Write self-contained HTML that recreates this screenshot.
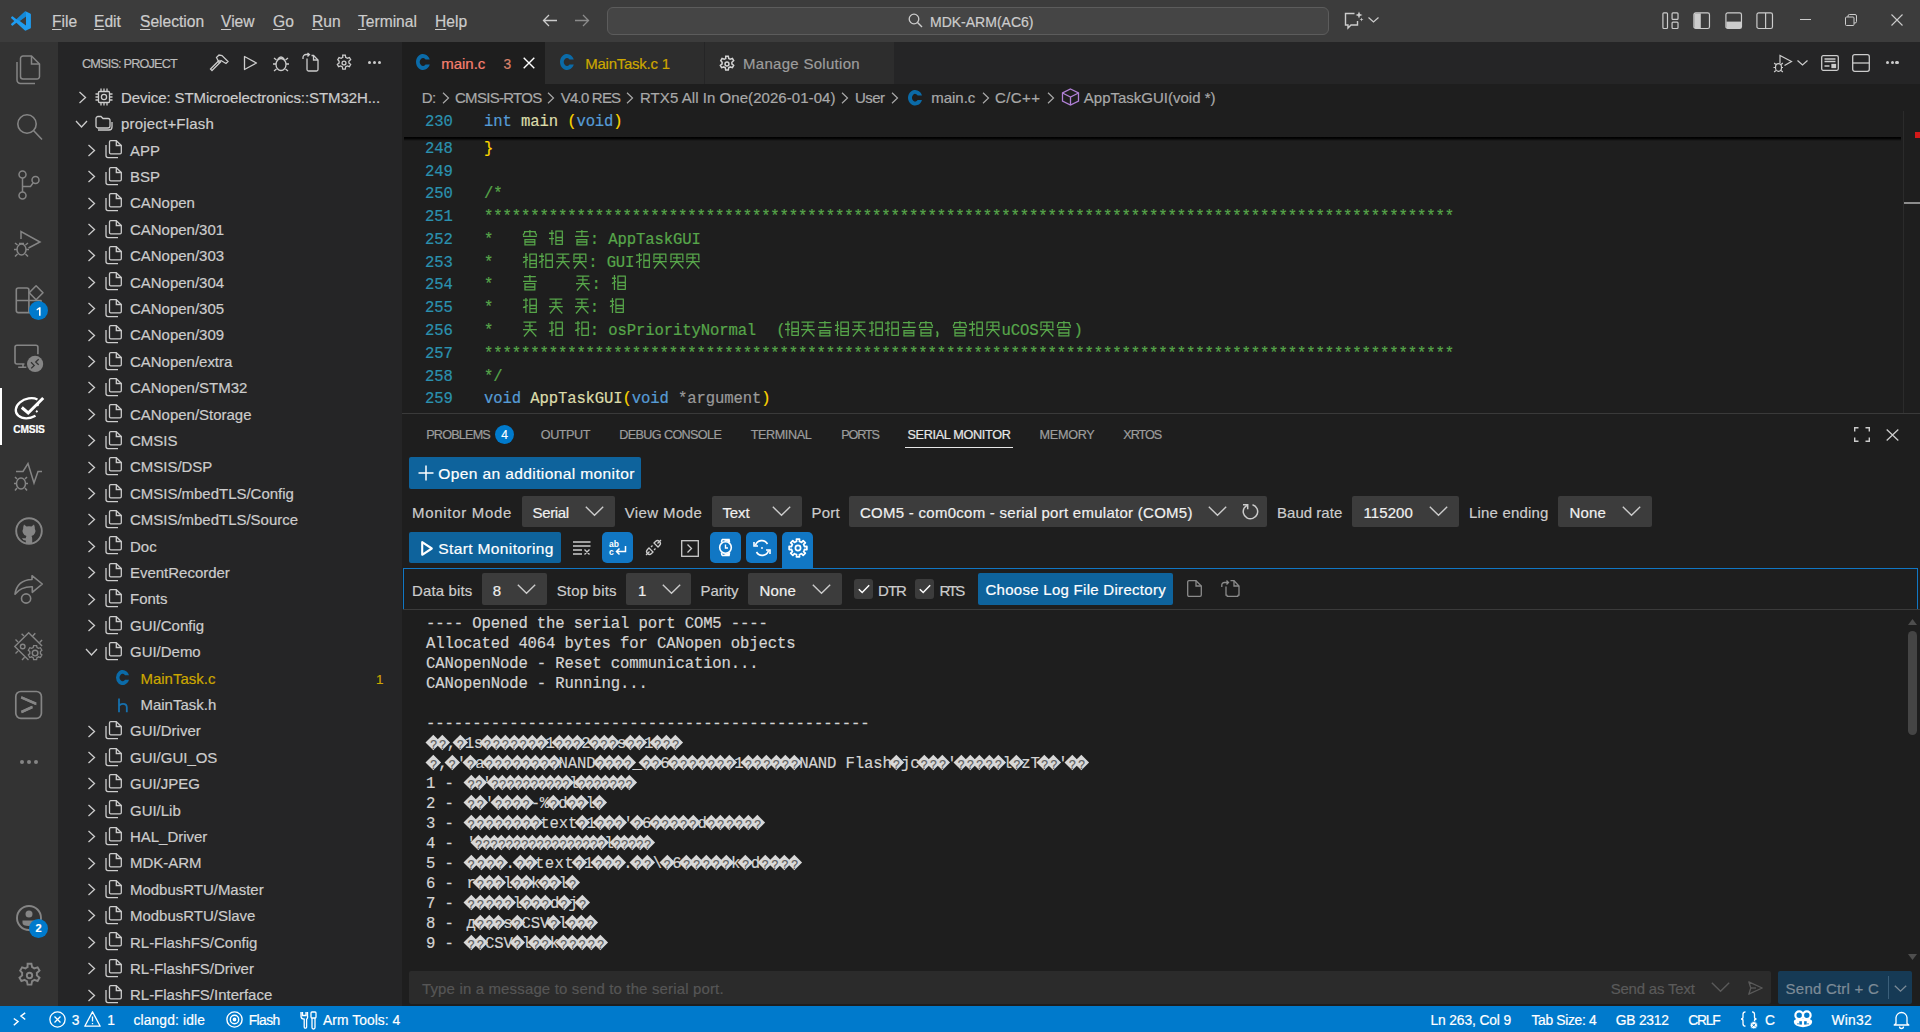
<!DOCTYPE html>
<html><head><meta charset="utf-8"><title>VS Code</title><style>
*{margin:0;padding:0;box-sizing:border-box}
html,body{width:1920px;height:1032px;overflow:hidden;background:#1e1e1e;font-family:"Liberation Sans",sans-serif;color:#cccccc}
.a{position:absolute}
.t{position:absolute;white-space:pre;font-size:15.6px;line-height:15.6px;-webkit-text-stroke:0.2px currentColor}
svg{position:absolute;overflow:visible}
.u{text-decoration:underline;text-underline-offset:2px}
</style></head><body>
<!-- ============ TITLE BAR ============ -->
<div class="a" id="title" style="left:0;top:0;width:1920px;height:42px;background:#3c3c3c"></div>
<svg style="left:10.5px;top:10.5px" width="20" height="20" viewBox="0 0 100 100"><path fill="#1f9cf0" fill-rule="evenodd" d="M74.9 2.3L96 12.5A6 6 0 0 1 99.5 18V82A6 6 0 0 1 96 87.5L74.9 97.7A6 6 0 0 1 68 96.5L27 59L9.5 72.3A4 4 0 0 1 4.4 72L1.3 69.2A4 4 0 0 1 1.3 63.3L16.5 50L1.3 36.7A4 4 0 0 1 1.3 30.8L4.4 28A4 4 0 0 1 9.5 27.7L27 41L68 3.5A6 6 0 0 1 74.9 2.3ZM75 27.3L43.8 50L75 72.7Z"/><path fill="#0065a9" opacity="0.35" d="M27 41L68 3.5L74.9 2.3V27.3L43.8 50Z"/></svg>
<div class="t" style="left:52px;top:13.8px"><span class="u">F</span>ile</div>
<div class="t" style="left:94px;top:13.8px"><span class="u">E</span>dit</div>
<div class="t" style="left:140px;top:13.8px"><span class="u">S</span>election</div>
<div class="t" style="left:221px;top:13.8px"><span class="u">V</span>iew</div>
<div class="t" style="left:273px;top:13.8px"><span class="u">G</span>o</div>
<div class="t" style="left:312px;top:13.8px"><span class="u">R</span>un</div>
<div class="t" style="left:358px;top:13.8px"><span class="u">T</span>erminal</div>
<div class="t" style="left:435px;top:13.8px"><span class="u">H</span>elp</div>
<!-- nav arrows -->
<svg style="left:542px;top:14px" width="16" height="13" viewBox="0 0 16 13"><path d="M15 6.5H1.5M7 1L1.5 6.5L7 12" stroke="#cccccc" stroke-width="1.3" fill="none"/></svg>
<svg style="left:574px;top:14px" width="16" height="13" viewBox="0 0 16 13"><path d="M1 6.5H14.5M9 1L14.5 6.5L9 12" stroke="#8b8b8b" stroke-width="1.3" fill="none"/></svg>
<!-- command center -->
<div class="a" style="left:607px;top:7px;width:722px;height:28px;background:#454545;border:1px solid #5c5c5c;border-radius:6px"></div>
<svg style="left:908px;top:13px" width="15" height="15" viewBox="0 0 15 15"><circle cx="6" cy="6" r="4.8" stroke="#cccccc" stroke-width="1.3" fill="none"/><path d="M9.5 9.5L14 14" stroke="#cccccc" stroke-width="1.4"/></svg>
<div class="t" style="left:930px;top:15px;font-size:14px;line-height:14px">MDK-ARM(AC6)</div>
<!-- copilot chat icon -->
<svg style="left:1344px;top:11px" width="20" height="18" viewBox="0 0 20 18"><path d="M10.5 2.5H1.5V14H4V17L7 14H13.5V10" stroke="#cccccc" stroke-width="1.4" fill="none"/><path d="M15 0.5L16 3L18.5 4L16 5L15 7.5L14 5L11.5 4L14 3Z" fill="#cccccc"/><path d="M17.5 6.5L18 8L19.5 8.5L18 9L17.5 10.5L17 9L15.5 8.5L17 8Z" fill="#cccccc"/></svg>
<svg style="left:1368px;top:17px" width="11" height="6" viewBox="0 0 11 6"><path d="M0.5 0.5L5.5 5L10.5 0.5" stroke="#cccccc" stroke-width="1.2" fill="none"/></svg>
<!-- layout icons -->
<svg style="left:1661.8px;top:11.8px" width="17.4" height="17.4" viewBox="0 0 19 19" fill="none" stroke="#cccccc" stroke-width="1.3"><rect x="1" y="1" width="5" height="17" rx="1"/><rect x="11" y="1" width="6.5" height="7" rx="1"/><rect x="11" y="11" width="6.5" height="7" rx="1"/></svg>
<svg style="left:1692.8px;top:11.8px" width="17.4" height="17.4" viewBox="0 0 19 19"><rect x="1" y="1" width="17" height="17" rx="2" stroke="#cccccc" stroke-width="1.3" fill="none"/><rect x="1.5" y="1.5" width="7" height="16" fill="#cccccc"/></svg>
<svg style="left:1724.8px;top:11.8px" width="17.4" height="17.4" viewBox="0 0 19 19"><rect x="1" y="1" width="17" height="17" rx="2" stroke="#cccccc" stroke-width="1.3" fill="none"/><rect x="1.5" y="10.5" width="16" height="7" fill="#cccccc"/></svg>
<svg style="left:1755.8px;top:11.8px" width="17.4" height="17.4" viewBox="0 0 19 19" fill="none" stroke="#cccccc" stroke-width="1.3"><rect x="1" y="1" width="17" height="17" rx="2"/><path d="M10.5 1V18"/></svg>
<!-- window controls -->
<div class="a" style="left:1800px;top:19px;width:11px;height:1px;background:#cccccc"></div>
<svg style="left:1845px;top:14px" width="12" height="12" viewBox="0 0 12 12" fill="none" stroke="#cccccc" stroke-width="1"><rect x="0.5" y="3" width="8.5" height="8.5" rx="1"/><path d="M3 3V2A1.5 1.5 0 0 1 4.5 0.5H10A1.5 1.5 0 0 1 11.5 2V7.5A1.5 1.5 0 0 1 10 9H9"/></svg>
<svg style="left:1891px;top:14px" width="12" height="12" viewBox="0 0 12 12"><path d="M0.5 0.5L11.5 11.5M11.5 0.5L0.5 11.5" stroke="#cccccc" stroke-width="1.1"/></svg>

<!-- ============ ACTIVITY BAR ============ -->
<div class="a" id="act" style="left:0;top:42px;width:58px;height:964px;background:#333333"></div>
<!-- explorer -->
<svg style="left:16px;top:55px" width="25" height="30" viewBox="0 0 25 30" fill="none" stroke="#858585" stroke-width="1.5"><path d="M4.5 4.5V3.5A2.5 2.5 0 0 1 7 1H15.5L23.5 9V21.5A2.5 2.5 0 0 1 21 24H7A2.5 2.5 0 0 1 4.5 21.5Z"/><path d="M15.5 1V9H23.5"/><path d="M1 7V25A3.5 3.5 0 0 0 4.5 28.5H19"/></svg>
<!-- search -->
<svg style="left:15px;top:113px" width="28" height="28" viewBox="0 0 28 28" fill="none" stroke="#858585" stroke-width="1.6"><circle cx="12" cy="11" r="9.2"/><path d="M18.5 17.5L27 26.5"/></svg>
<!-- source control -->
<svg style="left:17px;top:170px" width="24" height="30" viewBox="0 0 24 30" fill="none" stroke="#858585" stroke-width="1.5"><circle cx="5.5" cy="4.5" r="3.5"/><circle cx="18.5" cy="10" r="3.5"/><circle cx="5.5" cy="25.5" r="3.5"/><path d="M5.5 8V22M5.5 16.5H13.5L16 13"/></svg>
<!-- run & debug -->
<svg style="left:13px;top:229px" width="30" height="29" viewBox="0 0 30 29" fill="none" stroke="#858585" stroke-width="1.5"><path d="M8 10V2.5L27 13L15.5 19"/><ellipse cx="8.5" cy="20.5" rx="4.5" ry="5.5"/><path d="M4 20.5H1M13 20.5H16M4.5 16L2 14M12.5 16L15 14M4.5 25L2 27.5M12.5 25L15 27.5M6 14.5L11 14.5"/></svg>
<!-- extensions -->
<svg style="left:0;top:280px" width="58" height="40" viewBox="0 0 58 40" fill="none" stroke="#858585" stroke-width="1.6" stroke-linejoin="round"><path d="M18.3 8H26.9A2 2 0 0 1 28.9 10V32.6H18.3A2 2 0 0 1 16.3 30.6V10A2 2 0 0 1 18.3 8Z"/><path d="M16.3 20.5H41V30.6A2 2 0 0 1 39 32.6H28.9"/><path d="M36.1 5.8L43 12.8L36.1 19.7L29.2 12.8Z"/></svg>
<div class="a" style="left:29px;top:301px;width:19px;height:19px;border-radius:50%;background:#007acc"></div>
<svg style="left:36px;top:306.5px" width="6" height="9" viewBox="0 0 6 9"><path d="M0.5 2.2L3.3 0.3H4.6V8.7H3V2.3L0.9 3.6Z" fill="#fff"/></svg>
<!-- remote explorer -->
<svg style="left:0;top:336px" width="58" height="40" viewBox="0 0 58 40" fill="none" stroke="#858585" stroke-width="1.6"><path d="M24.5 28H17A2 2 0 0 1 15 26V11.2A2 2 0 0 1 17 9.2H35.9A2 2 0 0 1 37.9 11.2V18.3"/><path d="M18.2 31.2H26.3M23 28V31"/><circle cx="35.1" cy="27.9" r="8.1" fill="#858585" stroke="none"/><path d="M31 26.2L34.2 29.4L31.2 32.4M38.7 23.2L35.7 26L38.7 28.8" stroke="#333333" stroke-width="1.3"/></svg>
<!-- cmsis active -->
<div class="a" style="left:0;top:388px;width:2px;height:57px;background:#ffffff"></div>
<svg style="left:0;top:388px" width="58" height="40" viewBox="0 0 58 40" fill="none" stroke="#ffffff"><path d="M37.5 11.5A13.5 9.6 -18 1 0 35.5 27.8" stroke-width="2.3"/><path d="M21.8 19.5L28.2 25L43.2 10" stroke-width="3"/><path d="M38.6 16.2L37.2 18M37.4 22.6L36.2 24.2" stroke-width="1.8"/></svg>
<div class="t" style="left:13px;top:425.2px;width:32px;text-align:center;font-size:10.2px;line-height:10.2px;color:#fff;font-weight:bold;letter-spacing:-0.2px">CMSIS</div>
<!-- debug waveform -->
<svg style="left:13px;top:461.5px" width="30" height="30" viewBox="0 0 30 30" fill="none" stroke="#858585" stroke-width="1.5"><path d="M3 9.5H10L15 1.5L21 21L25 9.5H29"/><ellipse cx="8" cy="21.5" rx="4.5" ry="5.5"/><path d="M3.5 21.5H1M12.5 21.5H15M4 17L2 15M12 17L14 15M4 26L2 28.5M12 26L14 28.5"/></svg>
<!-- github -->
<svg style="left:15px;top:517px" width="28" height="28" viewBox="0 0 28 28"><circle cx="14" cy="14" r="12.8" fill="none" stroke="#858585" stroke-width="1.9"/><path d="M9 7.5L11.5 9.5Q14 8.8 16.5 9.5L19 7.5Q20 10 19.8 11.5Q21 13.5 20 16Q19 18.5 16.5 19Q17.2 20 17.2 21.5V26.5Q14 27.5 10.8 26.5V23.5Q8 23.8 7 21Q9 21.5 10.8 21.3Q10.8 20 11.5 19Q9 18.5 8 16Q7 13.5 8.2 11.5Q8 10 9 7.5Z" fill="#858585"/></svg>
<!-- share -->
<svg style="left:0;top:568px" width="58" height="40" viewBox="0 0 58 40" fill="none" stroke="#858585" stroke-width="1.6" stroke-linejoin="round"><path d="M15 26.2Q17 12 32 11.5V7.7L42.3 16L32.3 24.3V18.8Q21 18.5 15 26.2Z"/><circle cx="26.1" cy="30.5" r="4.6"/></svg>
<!-- device manager -->
<svg style="left:0;top:626px" width="58" height="40" viewBox="0 0 58 40" fill="none" stroke="#858585" stroke-width="1.4"><path d="M28.5 34.1L14.8 20.5L28.7 6.8L42.1 20"/><path d="M21.6 7.7L24 10M15.5 13.6L18 16M35.3 7.2L32.7 10M42.1 13.9L39.6 16.6M15.5 27.5L18 25M22 33.9L24.6 31.3"/><circle cx="22.7" cy="20.5" r="2.3"/><circle cx="35.1" cy="27.1" r="2.8"/><path d="M33.6 19.6H36.6L37 21.5L38.6 22.4L40.4 21.7L41.9 24.3L40.4 25.6V27.6L41.9 28.9L40.4 31.5L38.6 30.8L37 31.7L36.6 33.6H33.6L33.2 31.7L31.6 30.8L29.8 31.5L28.3 28.9L29.8 27.6V25.6L28.3 24.3L29.8 21.7L31.6 22.4L33.2 21.5Z" stroke-width="1.3"/></svg>
<!-- terminal box -->
<svg style="left:0;top:683px" width="58" height="40" viewBox="0 0 58 40" fill="none" stroke="#858585"><rect x="15.8" y="8.5" width="25.6" height="26.8" rx="5" stroke-width="1.7"/><path d="M21.3 13.2L36.4 19.8L36.4 22.2L21.3 15.6Z" fill="#858585" stroke="none"/><path d="M32.5 22.8L32.5 25.3L21.5 30.2L21.5 27.7Z" fill="#858585" stroke="none"/><path d="M21.2 14.4L36 20.8M32.3 24L21.4 29" stroke-width="2.6"/></svg>
<!-- ellipsis -->
<div class="a" style="left:20px;top:760px;width:4px;height:4px;border-radius:50%;background:#858585"></div>
<div class="a" style="left:27px;top:760px;width:4px;height:4px;border-radius:50%;background:#858585"></div>
<div class="a" style="left:34px;top:760px;width:4px;height:4px;border-radius:50%;background:#858585"></div>
<!-- accounts -->
<svg style="left:16px;top:905px" width="28" height="28" viewBox="0 0 28 28"><circle cx="13" cy="13" r="12" fill="none" stroke="#858585" stroke-width="1.9"/><circle cx="13" cy="9" r="3.5" fill="#858585"/><path d="M6.5 15.5H19.5V18Q19.5 21 13 21Q6.5 21 6.5 18Z" fill="#858585"/></svg>
<div class="a" style="left:29px;top:919px;width:19px;height:19px;border-radius:50%;background:#007acc"></div>
<div class="t" style="left:29px;top:923px;width:19px;text-align:center;font-size:11px;line-height:11px;color:#fff;font-weight:bold">2</div>
<!-- settings -->
<svg style="left:15.5px;top:961.5px" width="27" height="27" viewBox="0 0 24 24"><path fill="none" stroke="#858585" stroke-width="1.7" d="M10.3 1.5h3.4l.6 3.1a7.6 7.6 0 0 1 1.9 1.1l3-1 1.7 2.9-2.4 2.1a7.6 7.6 0 0 1 0 2.2l2.4 2.1-1.7 2.9-3-1a7.6 7.6 0 0 1-1.9 1.1l-.6 3.1h-3.4l-.6-3.1a7.6 7.6 0 0 1-1.9-1.1l-3 1-1.7-2.9 2.4-2.1a7.6 7.6 0 0 1 0-2.2L3.7 7.6l1.7-2.9 3 1a7.6 7.6 0 0 1 1.9-1.1z"/><circle cx="12" cy="12" r="2.4" fill="none" stroke="#858585" stroke-width="1.7"/></svg>

<!-- ============ SIDEBAR ============ -->
<div class="a" style="left:58px;top:42px;width:344px;height:964px;background:#252526"></div>
<div class="t" style="left:82.00px;top:58.00px;font-size:12.67px;line-height:12.67px;color:#bbbbbb;letter-spacing:-0.799px">CMSIS: PROJECT</div>
<svg style="left:209px;top:54px" width="20" height="17" viewBox="0 0 20 17" fill="none" stroke="#cccccc" stroke-width="1.3"><path d="M10.5 6L1.5 15L3 16.5L12 7.5"/><path d="M7.5 3.5L10 1L13 1.5L19 7.5L17 9.5L12 6.5L10 8.5Z" /></svg>
<svg style="left:243px;top:55px" width="15" height="16" viewBox="0 0 15 16" fill="none" stroke="#cccccc" stroke-width="1.3"><path d="M1.5 1.5V14.5L13.5 8Z" stroke-linejoin="round"/></svg>
<svg style="left:272px;top:54px" width="18" height="18" viewBox="0 0 18 18" fill="none" stroke="#cccccc" stroke-width="1.3"><ellipse cx="9" cy="10.5" rx="5" ry="6"/><path d="M5.5 5.5Q9 0.5 12.5 5.5M4 10H1M14 10H17M4.5 6L2 4M13.5 6L16 4M4.5 15L2 17M13.5 15L16 17"/></svg>
<svg style="left:302px;top:53px" width="17" height="19" viewBox="0 0 17 19" fill="none" stroke="#cccccc" stroke-width="1.3"><path d="M5 5.5V16.5A1.5 1.5 0 0 0 6.5 18H14.5A1.5 1.5 0 0 0 16 16.5V7L11.5 2.5H9.5"/><path d="M11.5 2.5V7H16"/><path d="M1 6V4.5A3 3 0 0 1 4 1.5H7M5.5 0L7.5 1.5L5.5 3.5"/></svg>
<svg style="left:335px;top:54px" width="18" height="18" viewBox="0 0 24 24"><path fill="none" stroke="#cccccc" stroke-width="1.7" d="M10.3 1.5h3.4l.6 3.1a7.6 7.6 0 0 1 1.9 1.1l3-1 1.7 2.9-2.4 2.1a7.6 7.6 0 0 1 0 2.2l2.4 2.1-1.7 2.9-3-1a7.6 7.6 0 0 1-1.9 1.1l-.6 3.1h-3.4l-.6-3.1a7.6 7.6 0 0 1-1.9-1.1l-3 1-1.7-2.9 2.4-2.1a7.6 7.6 0 0 1 0-2.2L3.7 7.6l1.7-2.9 3 1a7.6 7.6 0 0 1 1.9-1.1z"/><circle cx="12" cy="12" r="2.6" fill="none" stroke="#cccccc" stroke-width="1.7"/></svg>
<div class="a" style="left:367.79999999999995px;top:60.9px;width:3.2px;height:3.2px;background:#cccccc;border-radius:50%"></div>
<div class="a" style="left:373.0px;top:60.9px;width:3.2px;height:3.2px;background:#cccccc;border-radius:50%"></div>
<div class="a" style="left:378.2px;top:60.9px;width:3.2px;height:3.2px;background:#cccccc;border-radius:50%"></div>
<svg style="left:77.5px;top:90.9px" width="9" height="13" viewBox="0 0 9 13"><path d="M1.5 1L7.5 6.5L1.5 12" stroke="#cccccc" stroke-width="1.3" fill="none"/></svg>
<svg style="left:95px;top:88.4px" width="18" height="18" viewBox="0 0 18 18" fill="none" stroke="#cccccc" stroke-width="1.3"><rect x="3.5" y="3.5" width="11" height="11" rx="1"/><circle cx="9" cy="9" r="2.6"/><path d="M6 0.5V3M9 0.5V3M12 0.5V3M6 15V17.5M9 15V17.5M12 15V17.5M0.5 6H3M0.5 9H3M0.5 12H3M15 6H17.5M15 9H17.5M15 12H17.5"/></svg>
<div class="t" style="left:121.00px;top:90.00px;font-size:14.98px;line-height:14.98px;letter-spacing:-0.059px">Device: STMicroelectronics::STM32H...</div>
<svg style="left:74.5px;top:119.8px" width="13" height="8" viewBox="0 0 13 8"><path d="M1 1L6.5 7L12 1" stroke="#cccccc" stroke-width="1.3" fill="none"/></svg>
<svg style="left:95px;top:114.8px" width="18" height="16" viewBox="0 0 18 16" fill="none" stroke="#cccccc" stroke-width="1.3"><path d="M1 3.5A2 2 0 0 1 3 1.5H6L8 3.5H13A2 2 0 0 1 15 5.5V11A2 2 0 0 1 13 13H3A2 2 0 0 1 1 11Z"/><path d="M3 15H14A3 3 0 0 0 17 12V7"/></svg>
<div class="t" style="left:121.00px;top:116.00px;font-size:14.98px;line-height:14.98px;letter-spacing:0.209px">project+Flash</div>
<svg style="left:87px;top:143.7px" width="9" height="13" viewBox="0 0 9 13"><path d="M1.5 1L7.5 6.5L1.5 12" stroke="#cccccc" stroke-width="1.3" fill="none"/></svg>
<svg style="left:105px;top:140.4px" width="18" height="19" viewBox="0 0 18 19" fill="none" stroke="#cccccc" stroke-width="1.3"><path d="M4.5 1.9A1.2 1.2 0 0 1 5.7 0.7H11.3L16.3 5.5V12.6A1.2 1.2 0 0 1 15.1 13.8H5.7A1.2 1.2 0 0 1 4.5 12.6Z"/><path d="M11.3 0.7V5.5H16.3"/><path d="M1 5V15.6A2 2 0 0 0 3 17.6H13"/></svg>
<div class="t" style="left:130.00px;top:143.00px;font-size:14.98px;line-height:14.98px">APP</div>
<svg style="left:87px;top:170.1px" width="9" height="13" viewBox="0 0 9 13"><path d="M1.5 1L7.5 6.5L1.5 12" stroke="#cccccc" stroke-width="1.3" fill="none"/></svg>
<svg style="left:105px;top:166.8px" width="18" height="19" viewBox="0 0 18 19" fill="none" stroke="#cccccc" stroke-width="1.3"><path d="M4.5 1.9A1.2 1.2 0 0 1 5.7 0.7H11.3L16.3 5.5V12.6A1.2 1.2 0 0 1 15.1 13.8H5.7A1.2 1.2 0 0 1 4.5 12.6Z"/><path d="M11.3 0.7V5.5H16.3"/><path d="M1 5V15.6A2 2 0 0 0 3 17.6H13"/></svg>
<div class="t" style="left:130.00px;top:169.00px;font-size:14.98px;line-height:14.98px">BSP</div>
<svg style="left:87px;top:196.5px" width="9" height="13" viewBox="0 0 9 13"><path d="M1.5 1L7.5 6.5L1.5 12" stroke="#cccccc" stroke-width="1.3" fill="none"/></svg>
<svg style="left:105px;top:193.2px" width="18" height="19" viewBox="0 0 18 19" fill="none" stroke="#cccccc" stroke-width="1.3"><path d="M4.5 1.9A1.2 1.2 0 0 1 5.7 0.7H11.3L16.3 5.5V12.6A1.2 1.2 0 0 1 15.1 13.8H5.7A1.2 1.2 0 0 1 4.5 12.6Z"/><path d="M11.3 0.7V5.5H16.3"/><path d="M1 5V15.6A2 2 0 0 0 3 17.6H13"/></svg>
<div class="t" style="left:130.00px;top:195.00px;font-size:14.98px;line-height:14.98px">CANopen</div>
<svg style="left:87px;top:222.9px" width="9" height="13" viewBox="0 0 9 13"><path d="M1.5 1L7.5 6.5L1.5 12" stroke="#cccccc" stroke-width="1.3" fill="none"/></svg>
<svg style="left:105px;top:219.6px" width="18" height="19" viewBox="0 0 18 19" fill="none" stroke="#cccccc" stroke-width="1.3"><path d="M4.5 1.9A1.2 1.2 0 0 1 5.7 0.7H11.3L16.3 5.5V12.6A1.2 1.2 0 0 1 15.1 13.8H5.7A1.2 1.2 0 0 1 4.5 12.6Z"/><path d="M11.3 0.7V5.5H16.3"/><path d="M1 5V15.6A2 2 0 0 0 3 17.6H13"/></svg>
<div class="t" style="left:130.00px;top:222.00px;font-size:14.98px;line-height:14.98px">CANopen/301</div>
<svg style="left:87px;top:249.3px" width="9" height="13" viewBox="0 0 9 13"><path d="M1.5 1L7.5 6.5L1.5 12" stroke="#cccccc" stroke-width="1.3" fill="none"/></svg>
<svg style="left:105px;top:246.0px" width="18" height="19" viewBox="0 0 18 19" fill="none" stroke="#cccccc" stroke-width="1.3"><path d="M4.5 1.9A1.2 1.2 0 0 1 5.7 0.7H11.3L16.3 5.5V12.6A1.2 1.2 0 0 1 15.1 13.8H5.7A1.2 1.2 0 0 1 4.5 12.6Z"/><path d="M11.3 0.7V5.5H16.3"/><path d="M1 5V15.6A2 2 0 0 0 3 17.6H13"/></svg>
<div class="t" style="left:130.00px;top:248.00px;font-size:14.98px;line-height:14.98px">CANopen/303</div>
<svg style="left:87px;top:275.7px" width="9" height="13" viewBox="0 0 9 13"><path d="M1.5 1L7.5 6.5L1.5 12" stroke="#cccccc" stroke-width="1.3" fill="none"/></svg>
<svg style="left:105px;top:272.4px" width="18" height="19" viewBox="0 0 18 19" fill="none" stroke="#cccccc" stroke-width="1.3"><path d="M4.5 1.9A1.2 1.2 0 0 1 5.7 0.7H11.3L16.3 5.5V12.6A1.2 1.2 0 0 1 15.1 13.8H5.7A1.2 1.2 0 0 1 4.5 12.6Z"/><path d="M11.3 0.7V5.5H16.3"/><path d="M1 5V15.6A2 2 0 0 0 3 17.6H13"/></svg>
<div class="t" style="left:130.00px;top:275.00px;font-size:14.98px;line-height:14.98px">CANopen/304</div>
<svg style="left:87px;top:302.1px" width="9" height="13" viewBox="0 0 9 13"><path d="M1.5 1L7.5 6.5L1.5 12" stroke="#cccccc" stroke-width="1.3" fill="none"/></svg>
<svg style="left:105px;top:298.8px" width="18" height="19" viewBox="0 0 18 19" fill="none" stroke="#cccccc" stroke-width="1.3"><path d="M4.5 1.9A1.2 1.2 0 0 1 5.7 0.7H11.3L16.3 5.5V12.6A1.2 1.2 0 0 1 15.1 13.8H5.7A1.2 1.2 0 0 1 4.5 12.6Z"/><path d="M11.3 0.7V5.5H16.3"/><path d="M1 5V15.6A2 2 0 0 0 3 17.6H13"/></svg>
<div class="t" style="left:130.00px;top:301.00px;font-size:14.98px;line-height:14.98px">CANopen/305</div>
<svg style="left:87px;top:328.5px" width="9" height="13" viewBox="0 0 9 13"><path d="M1.5 1L7.5 6.5L1.5 12" stroke="#cccccc" stroke-width="1.3" fill="none"/></svg>
<svg style="left:105px;top:325.2px" width="18" height="19" viewBox="0 0 18 19" fill="none" stroke="#cccccc" stroke-width="1.3"><path d="M4.5 1.9A1.2 1.2 0 0 1 5.7 0.7H11.3L16.3 5.5V12.6A1.2 1.2 0 0 1 15.1 13.8H5.7A1.2 1.2 0 0 1 4.5 12.6Z"/><path d="M11.3 0.7V5.5H16.3"/><path d="M1 5V15.6A2 2 0 0 0 3 17.6H13"/></svg>
<div class="t" style="left:130.00px;top:327.00px;font-size:14.98px;line-height:14.98px">CANopen/309</div>
<svg style="left:87px;top:354.9px" width="9" height="13" viewBox="0 0 9 13"><path d="M1.5 1L7.5 6.5L1.5 12" stroke="#cccccc" stroke-width="1.3" fill="none"/></svg>
<svg style="left:105px;top:351.6px" width="18" height="19" viewBox="0 0 18 19" fill="none" stroke="#cccccc" stroke-width="1.3"><path d="M4.5 1.9A1.2 1.2 0 0 1 5.7 0.7H11.3L16.3 5.5V12.6A1.2 1.2 0 0 1 15.1 13.8H5.7A1.2 1.2 0 0 1 4.5 12.6Z"/><path d="M11.3 0.7V5.5H16.3"/><path d="M1 5V15.6A2 2 0 0 0 3 17.6H13"/></svg>
<div class="t" style="left:130.00px;top:354.00px;font-size:14.98px;line-height:14.98px">CANopen/extra</div>
<svg style="left:87px;top:381.3px" width="9" height="13" viewBox="0 0 9 13"><path d="M1.5 1L7.5 6.5L1.5 12" stroke="#cccccc" stroke-width="1.3" fill="none"/></svg>
<svg style="left:105px;top:378.0px" width="18" height="19" viewBox="0 0 18 19" fill="none" stroke="#cccccc" stroke-width="1.3"><path d="M4.5 1.9A1.2 1.2 0 0 1 5.7 0.7H11.3L16.3 5.5V12.6A1.2 1.2 0 0 1 15.1 13.8H5.7A1.2 1.2 0 0 1 4.5 12.6Z"/><path d="M11.3 0.7V5.5H16.3"/><path d="M1 5V15.6A2 2 0 0 0 3 17.6H13"/></svg>
<div class="t" style="left:130.00px;top:380.00px;font-size:14.98px;line-height:14.98px">CANopen/STM32</div>
<svg style="left:87px;top:407.7px" width="9" height="13" viewBox="0 0 9 13"><path d="M1.5 1L7.5 6.5L1.5 12" stroke="#cccccc" stroke-width="1.3" fill="none"/></svg>
<svg style="left:105px;top:404.4px" width="18" height="19" viewBox="0 0 18 19" fill="none" stroke="#cccccc" stroke-width="1.3"><path d="M4.5 1.9A1.2 1.2 0 0 1 5.7 0.7H11.3L16.3 5.5V12.6A1.2 1.2 0 0 1 15.1 13.8H5.7A1.2 1.2 0 0 1 4.5 12.6Z"/><path d="M11.3 0.7V5.5H16.3"/><path d="M1 5V15.6A2 2 0 0 0 3 17.6H13"/></svg>
<div class="t" style="left:130.00px;top:407.00px;font-size:14.98px;line-height:14.98px">CANopen/Storage</div>
<svg style="left:87px;top:434.1px" width="9" height="13" viewBox="0 0 9 13"><path d="M1.5 1L7.5 6.5L1.5 12" stroke="#cccccc" stroke-width="1.3" fill="none"/></svg>
<svg style="left:105px;top:430.8px" width="18" height="19" viewBox="0 0 18 19" fill="none" stroke="#cccccc" stroke-width="1.3"><path d="M4.5 1.9A1.2 1.2 0 0 1 5.7 0.7H11.3L16.3 5.5V12.6A1.2 1.2 0 0 1 15.1 13.8H5.7A1.2 1.2 0 0 1 4.5 12.6Z"/><path d="M11.3 0.7V5.5H16.3"/><path d="M1 5V15.6A2 2 0 0 0 3 17.6H13"/></svg>
<div class="t" style="left:130.00px;top:433.00px;font-size:14.98px;line-height:14.98px">CMSIS</div>
<svg style="left:87px;top:460.5px" width="9" height="13" viewBox="0 0 9 13"><path d="M1.5 1L7.5 6.5L1.5 12" stroke="#cccccc" stroke-width="1.3" fill="none"/></svg>
<svg style="left:105px;top:457.2px" width="18" height="19" viewBox="0 0 18 19" fill="none" stroke="#cccccc" stroke-width="1.3"><path d="M4.5 1.9A1.2 1.2 0 0 1 5.7 0.7H11.3L16.3 5.5V12.6A1.2 1.2 0 0 1 15.1 13.8H5.7A1.2 1.2 0 0 1 4.5 12.6Z"/><path d="M11.3 0.7V5.5H16.3"/><path d="M1 5V15.6A2 2 0 0 0 3 17.6H13"/></svg>
<div class="t" style="left:130.00px;top:459.00px;font-size:14.98px;line-height:14.98px">CMSIS/DSP</div>
<svg style="left:87px;top:486.9px" width="9" height="13" viewBox="0 0 9 13"><path d="M1.5 1L7.5 6.5L1.5 12" stroke="#cccccc" stroke-width="1.3" fill="none"/></svg>
<svg style="left:105px;top:483.6px" width="18" height="19" viewBox="0 0 18 19" fill="none" stroke="#cccccc" stroke-width="1.3"><path d="M4.5 1.9A1.2 1.2 0 0 1 5.7 0.7H11.3L16.3 5.5V12.6A1.2 1.2 0 0 1 15.1 13.8H5.7A1.2 1.2 0 0 1 4.5 12.6Z"/><path d="M11.3 0.7V5.5H16.3"/><path d="M1 5V15.6A2 2 0 0 0 3 17.6H13"/></svg>
<div class="t" style="left:130.00px;top:486.00px;font-size:14.98px;line-height:14.98px">CMSIS/mbedTLS/Config</div>
<svg style="left:87px;top:513.3px" width="9" height="13" viewBox="0 0 9 13"><path d="M1.5 1L7.5 6.5L1.5 12" stroke="#cccccc" stroke-width="1.3" fill="none"/></svg>
<svg style="left:105px;top:510.0px" width="18" height="19" viewBox="0 0 18 19" fill="none" stroke="#cccccc" stroke-width="1.3"><path d="M4.5 1.9A1.2 1.2 0 0 1 5.7 0.7H11.3L16.3 5.5V12.6A1.2 1.2 0 0 1 15.1 13.8H5.7A1.2 1.2 0 0 1 4.5 12.6Z"/><path d="M11.3 0.7V5.5H16.3"/><path d="M1 5V15.6A2 2 0 0 0 3 17.6H13"/></svg>
<div class="t" style="left:130.00px;top:512.00px;font-size:14.98px;line-height:14.98px">CMSIS/mbedTLS/Source</div>
<svg style="left:87px;top:539.7px" width="9" height="13" viewBox="0 0 9 13"><path d="M1.5 1L7.5 6.5L1.5 12" stroke="#cccccc" stroke-width="1.3" fill="none"/></svg>
<svg style="left:105px;top:536.4px" width="18" height="19" viewBox="0 0 18 19" fill="none" stroke="#cccccc" stroke-width="1.3"><path d="M4.5 1.9A1.2 1.2 0 0 1 5.7 0.7H11.3L16.3 5.5V12.6A1.2 1.2 0 0 1 15.1 13.8H5.7A1.2 1.2 0 0 1 4.5 12.6Z"/><path d="M11.3 0.7V5.5H16.3"/><path d="M1 5V15.6A2 2 0 0 0 3 17.6H13"/></svg>
<div class="t" style="left:130.00px;top:539.00px;font-size:14.98px;line-height:14.98px">Doc</div>
<svg style="left:87px;top:566.1px" width="9" height="13" viewBox="0 0 9 13"><path d="M1.5 1L7.5 6.5L1.5 12" stroke="#cccccc" stroke-width="1.3" fill="none"/></svg>
<svg style="left:105px;top:562.8px" width="18" height="19" viewBox="0 0 18 19" fill="none" stroke="#cccccc" stroke-width="1.3"><path d="M4.5 1.9A1.2 1.2 0 0 1 5.7 0.7H11.3L16.3 5.5V12.6A1.2 1.2 0 0 1 15.1 13.8H5.7A1.2 1.2 0 0 1 4.5 12.6Z"/><path d="M11.3 0.7V5.5H16.3"/><path d="M1 5V15.6A2 2 0 0 0 3 17.6H13"/></svg>
<div class="t" style="left:130.00px;top:565.00px;font-size:14.98px;line-height:14.98px">EventRecorder</div>
<svg style="left:87px;top:592.5px" width="9" height="13" viewBox="0 0 9 13"><path d="M1.5 1L7.5 6.5L1.5 12" stroke="#cccccc" stroke-width="1.3" fill="none"/></svg>
<svg style="left:105px;top:589.2px" width="18" height="19" viewBox="0 0 18 19" fill="none" stroke="#cccccc" stroke-width="1.3"><path d="M4.5 1.9A1.2 1.2 0 0 1 5.7 0.7H11.3L16.3 5.5V12.6A1.2 1.2 0 0 1 15.1 13.8H5.7A1.2 1.2 0 0 1 4.5 12.6Z"/><path d="M11.3 0.7V5.5H16.3"/><path d="M1 5V15.6A2 2 0 0 0 3 17.6H13"/></svg>
<div class="t" style="left:130.00px;top:591.00px;font-size:14.98px;line-height:14.98px">Fonts</div>
<svg style="left:87px;top:618.9px" width="9" height="13" viewBox="0 0 9 13"><path d="M1.5 1L7.5 6.5L1.5 12" stroke="#cccccc" stroke-width="1.3" fill="none"/></svg>
<svg style="left:105px;top:615.6px" width="18" height="19" viewBox="0 0 18 19" fill="none" stroke="#cccccc" stroke-width="1.3"><path d="M4.5 1.9A1.2 1.2 0 0 1 5.7 0.7H11.3L16.3 5.5V12.6A1.2 1.2 0 0 1 15.1 13.8H5.7A1.2 1.2 0 0 1 4.5 12.6Z"/><path d="M11.3 0.7V5.5H16.3"/><path d="M1 5V15.6A2 2 0 0 0 3 17.6H13"/></svg>
<div class="t" style="left:130.00px;top:618.00px;font-size:14.98px;line-height:14.98px">GUI/Config</div>
<svg style="left:84.5px;top:647.8px" width="13" height="8" viewBox="0 0 13 8"><path d="M1 1L6.5 7L12 1" stroke="#cccccc" stroke-width="1.3" fill="none"/></svg>
<svg style="left:105px;top:642.0px" width="18" height="19" viewBox="0 0 18 19" fill="none" stroke="#cccccc" stroke-width="1.3"><path d="M4.5 1.9A1.2 1.2 0 0 1 5.7 0.7H11.3L16.3 5.5V12.6A1.2 1.2 0 0 1 15.1 13.8H5.7A1.2 1.2 0 0 1 4.5 12.6Z"/><path d="M11.3 0.7V5.5H16.3"/><path d="M1 5V15.6A2 2 0 0 0 3 17.6H13"/></svg>
<div class="t" style="left:130.00px;top:644.00px;font-size:14.98px;line-height:14.98px">GUI/Demo</div>
<svg style="left:115.8px;top:669.6999999999999px" width="13.3" height="15.1" viewBox="0 0 14 16" preserveAspectRatio="none"><path d="M13.68 5.6A7 8 0 1 0 13.68 10.4L9.48 10.4A3.1 4 0 1 1 9.48 5.6Z" fill="#0b6ba8"/></svg>
<div class="t" style="left:376.00px;top:673.00px;font-size:13.44px;line-height:13.44px;color:#cca700">1</div>
<div class="t" style="left:140.50px;top:671.00px;font-size:14.98px;line-height:14.98px;color:#cca700">MainTask.c</div>
<svg style="left:116.5px;top:698.2px" width="12" height="15" viewBox="0 0 12 15" fill="none" stroke="#1670ad" stroke-width="1.8"><path d="M2 0.5V14.3M2 8Q3 5.8 6 5.8Q9.8 5.8 9.8 9.3V14.3"/></svg>
<div class="t" style="left:140.50px;top:697.00px;font-size:14.98px;line-height:14.98px;color:#cccccc">MainTask.h</div>
<svg style="left:87px;top:724.5px" width="9" height="13" viewBox="0 0 9 13"><path d="M1.5 1L7.5 6.5L1.5 12" stroke="#cccccc" stroke-width="1.3" fill="none"/></svg>
<svg style="left:105px;top:721.2px" width="18" height="19" viewBox="0 0 18 19" fill="none" stroke="#cccccc" stroke-width="1.3"><path d="M4.5 1.9A1.2 1.2 0 0 1 5.7 0.7H11.3L16.3 5.5V12.6A1.2 1.2 0 0 1 15.1 13.8H5.7A1.2 1.2 0 0 1 4.5 12.6Z"/><path d="M11.3 0.7V5.5H16.3"/><path d="M1 5V15.6A2 2 0 0 0 3 17.6H13"/></svg>
<div class="t" style="left:130.00px;top:723.00px;font-size:14.98px;line-height:14.98px">GUI/Driver</div>
<svg style="left:87px;top:750.9px" width="9" height="13" viewBox="0 0 9 13"><path d="M1.5 1L7.5 6.5L1.5 12" stroke="#cccccc" stroke-width="1.3" fill="none"/></svg>
<svg style="left:105px;top:747.6px" width="18" height="19" viewBox="0 0 18 19" fill="none" stroke="#cccccc" stroke-width="1.3"><path d="M4.5 1.9A1.2 1.2 0 0 1 5.7 0.7H11.3L16.3 5.5V12.6A1.2 1.2 0 0 1 15.1 13.8H5.7A1.2 1.2 0 0 1 4.5 12.6Z"/><path d="M11.3 0.7V5.5H16.3"/><path d="M1 5V15.6A2 2 0 0 0 3 17.6H13"/></svg>
<div class="t" style="left:130.00px;top:750.00px;font-size:14.98px;line-height:14.98px">GUI/GUI_OS</div>
<svg style="left:87px;top:777.3px" width="9" height="13" viewBox="0 0 9 13"><path d="M1.5 1L7.5 6.5L1.5 12" stroke="#cccccc" stroke-width="1.3" fill="none"/></svg>
<svg style="left:105px;top:774.0px" width="18" height="19" viewBox="0 0 18 19" fill="none" stroke="#cccccc" stroke-width="1.3"><path d="M4.5 1.9A1.2 1.2 0 0 1 5.7 0.7H11.3L16.3 5.5V12.6A1.2 1.2 0 0 1 15.1 13.8H5.7A1.2 1.2 0 0 1 4.5 12.6Z"/><path d="M11.3 0.7V5.5H16.3"/><path d="M1 5V15.6A2 2 0 0 0 3 17.6H13"/></svg>
<div class="t" style="left:130.00px;top:776.00px;font-size:14.98px;line-height:14.98px">GUI/JPEG</div>
<svg style="left:87px;top:803.7px" width="9" height="13" viewBox="0 0 9 13"><path d="M1.5 1L7.5 6.5L1.5 12" stroke="#cccccc" stroke-width="1.3" fill="none"/></svg>
<svg style="left:105px;top:800.4px" width="18" height="19" viewBox="0 0 18 19" fill="none" stroke="#cccccc" stroke-width="1.3"><path d="M4.5 1.9A1.2 1.2 0 0 1 5.7 0.7H11.3L16.3 5.5V12.6A1.2 1.2 0 0 1 15.1 13.8H5.7A1.2 1.2 0 0 1 4.5 12.6Z"/><path d="M11.3 0.7V5.5H16.3"/><path d="M1 5V15.6A2 2 0 0 0 3 17.6H13"/></svg>
<div class="t" style="left:130.00px;top:803.00px;font-size:14.98px;line-height:14.98px">GUI/Lib</div>
<svg style="left:87px;top:830.1px" width="9" height="13" viewBox="0 0 9 13"><path d="M1.5 1L7.5 6.5L1.5 12" stroke="#cccccc" stroke-width="1.3" fill="none"/></svg>
<svg style="left:105px;top:826.8px" width="18" height="19" viewBox="0 0 18 19" fill="none" stroke="#cccccc" stroke-width="1.3"><path d="M4.5 1.9A1.2 1.2 0 0 1 5.7 0.7H11.3L16.3 5.5V12.6A1.2 1.2 0 0 1 15.1 13.8H5.7A1.2 1.2 0 0 1 4.5 12.6Z"/><path d="M11.3 0.7V5.5H16.3"/><path d="M1 5V15.6A2 2 0 0 0 3 17.6H13"/></svg>
<div class="t" style="left:130.00px;top:829.00px;font-size:14.98px;line-height:14.98px">HAL_Driver</div>
<svg style="left:87px;top:856.5px" width="9" height="13" viewBox="0 0 9 13"><path d="M1.5 1L7.5 6.5L1.5 12" stroke="#cccccc" stroke-width="1.3" fill="none"/></svg>
<svg style="left:105px;top:853.2px" width="18" height="19" viewBox="0 0 18 19" fill="none" stroke="#cccccc" stroke-width="1.3"><path d="M4.5 1.9A1.2 1.2 0 0 1 5.7 0.7H11.3L16.3 5.5V12.6A1.2 1.2 0 0 1 15.1 13.8H5.7A1.2 1.2 0 0 1 4.5 12.6Z"/><path d="M11.3 0.7V5.5H16.3"/><path d="M1 5V15.6A2 2 0 0 0 3 17.6H13"/></svg>
<div class="t" style="left:130.00px;top:855.00px;font-size:14.98px;line-height:14.98px">MDK-ARM</div>
<svg style="left:87px;top:882.9px" width="9" height="13" viewBox="0 0 9 13"><path d="M1.5 1L7.5 6.5L1.5 12" stroke="#cccccc" stroke-width="1.3" fill="none"/></svg>
<svg style="left:105px;top:879.6px" width="18" height="19" viewBox="0 0 18 19" fill="none" stroke="#cccccc" stroke-width="1.3"><path d="M4.5 1.9A1.2 1.2 0 0 1 5.7 0.7H11.3L16.3 5.5V12.6A1.2 1.2 0 0 1 15.1 13.8H5.7A1.2 1.2 0 0 1 4.5 12.6Z"/><path d="M11.3 0.7V5.5H16.3"/><path d="M1 5V15.6A2 2 0 0 0 3 17.6H13"/></svg>
<div class="t" style="left:130.00px;top:882.00px;font-size:14.98px;line-height:14.98px">ModbusRTU/Master</div>
<svg style="left:87px;top:909.3px" width="9" height="13" viewBox="0 0 9 13"><path d="M1.5 1L7.5 6.5L1.5 12" stroke="#cccccc" stroke-width="1.3" fill="none"/></svg>
<svg style="left:105px;top:906.0px" width="18" height="19" viewBox="0 0 18 19" fill="none" stroke="#cccccc" stroke-width="1.3"><path d="M4.5 1.9A1.2 1.2 0 0 1 5.7 0.7H11.3L16.3 5.5V12.6A1.2 1.2 0 0 1 15.1 13.8H5.7A1.2 1.2 0 0 1 4.5 12.6Z"/><path d="M11.3 0.7V5.5H16.3"/><path d="M1 5V15.6A2 2 0 0 0 3 17.6H13"/></svg>
<div class="t" style="left:130.00px;top:908.00px;font-size:14.98px;line-height:14.98px">ModbusRTU/Slave</div>
<svg style="left:87px;top:935.7px" width="9" height="13" viewBox="0 0 9 13"><path d="M1.5 1L7.5 6.5L1.5 12" stroke="#cccccc" stroke-width="1.3" fill="none"/></svg>
<svg style="left:105px;top:932.4px" width="18" height="19" viewBox="0 0 18 19" fill="none" stroke="#cccccc" stroke-width="1.3"><path d="M4.5 1.9A1.2 1.2 0 0 1 5.7 0.7H11.3L16.3 5.5V12.6A1.2 1.2 0 0 1 15.1 13.8H5.7A1.2 1.2 0 0 1 4.5 12.6Z"/><path d="M11.3 0.7V5.5H16.3"/><path d="M1 5V15.6A2 2 0 0 0 3 17.6H13"/></svg>
<div class="t" style="left:130.00px;top:935.00px;font-size:14.98px;line-height:14.98px">RL-FlashFS/Config</div>
<svg style="left:87px;top:962.1px" width="9" height="13" viewBox="0 0 9 13"><path d="M1.5 1L7.5 6.5L1.5 12" stroke="#cccccc" stroke-width="1.3" fill="none"/></svg>
<svg style="left:105px;top:958.8px" width="18" height="19" viewBox="0 0 18 19" fill="none" stroke="#cccccc" stroke-width="1.3"><path d="M4.5 1.9A1.2 1.2 0 0 1 5.7 0.7H11.3L16.3 5.5V12.6A1.2 1.2 0 0 1 15.1 13.8H5.7A1.2 1.2 0 0 1 4.5 12.6Z"/><path d="M11.3 0.7V5.5H16.3"/><path d="M1 5V15.6A2 2 0 0 0 3 17.6H13"/></svg>
<div class="t" style="left:130.00px;top:961.00px;font-size:14.98px;line-height:14.98px">RL-FlashFS/Driver</div>
<svg style="left:87px;top:988.5px" width="9" height="13" viewBox="0 0 9 13"><path d="M1.5 1L7.5 6.5L1.5 12" stroke="#cccccc" stroke-width="1.3" fill="none"/></svg>
<svg style="left:105px;top:985.2px" width="18" height="19" viewBox="0 0 18 19" fill="none" stroke="#cccccc" stroke-width="1.3"><path d="M4.5 1.9A1.2 1.2 0 0 1 5.7 0.7H11.3L16.3 5.5V12.6A1.2 1.2 0 0 1 15.1 13.8H5.7A1.2 1.2 0 0 1 4.5 12.6Z"/><path d="M11.3 0.7V5.5H16.3"/><path d="M1 5V15.6A2 2 0 0 0 3 17.6H13"/></svg>
<div class="t" style="left:130.00px;top:987.00px;font-size:14.98px;line-height:14.98px">RL-FlashFS/Interface</div>
<!-- ============ EDITOR ============ -->
<div class="a" style="left:402px;top:42px;width:1518px;height:42px;background:#252526"></div>
<div class="a" style="left:402px;top:42px;width:143px;height:42px;background:#1e1e1e"></div>
<div class="a" style="left:545.3px;top:42px;width:158.7px;height:42px;background:#2d2d2d"></div>
<div class="a" style="left:704px;top:42px;width:1px;height:42px;background:#252526"></div>
<div class="a" style="left:705px;top:42px;width:189px;height:42px;background:#2d2d2d"></div>
<svg style="left:416.3px;top:54.3px" width="14.1" height="16" viewBox="0 0 14 16" preserveAspectRatio="none"><path d="M13.68 5.6A7 8 0 1 0 13.68 10.4L9.48 10.4A3.1 4 0 1 1 9.48 5.6Z" fill="#0b6ba8"/></svg>
<div class="t" style="left:441.30px;top:56.00px;font-size:14.98px;line-height:14.98px;color:#f88070;letter-spacing:-0.016px">main.c</div>
<div class="t" style="left:503.50px;top:58.00px;font-size:13.82px;line-height:13.82px;color:#d9826b">3</div>
<svg style="left:522.5px;top:56.5px" width="12" height="12" viewBox="0 0 12 12"><path d="M0.7 0.7L11.3 11.3M11.3 0.7L0.7 11.3" stroke="#ffffff" stroke-width="1.4"/></svg>
<svg style="left:560.3px;top:54.3px" width="14.1" height="16" viewBox="0 0 14 16" preserveAspectRatio="none"><path d="M13.68 5.6A7 8 0 1 0 13.68 10.4L9.48 10.4A3.1 4 0 1 1 9.48 5.6Z" fill="#0b6ba8"/></svg>
<div class="t" style="left:585.30px;top:56.00px;font-size:14.98px;line-height:14.98px;color:#cca700;letter-spacing:-0.238px">MainTask.c 1</div>
<svg style="left:717.5px;top:54.5px" width="18" height="18" viewBox="0 0 24 24"><path fill="none" stroke="#d4d4d4" stroke-width="2" d="M10.3 1.5h3.4l.6 3.1a7.6 7.6 0 0 1 1.9 1.1l3-1 1.7 2.9-2.4 2.1a7.6 7.6 0 0 1 0 2.2l2.4 2.1-1.7 2.9-3-1a7.6 7.6 0 0 1-1.9 1.1l-.6 3.1h-3.4l-.6-3.1a7.6 7.6 0 0 1-1.9-1.1l-3 1-1.7-2.9 2.4-2.1a7.6 7.6 0 0 1 0-2.2L3.7 7.6l1.7-2.9 3 1a7.6 7.6 0 0 1 1.9-1.1z"/><circle cx="12" cy="12" r="2.6" fill="none" stroke="#d4d4d4" stroke-width="2"/></svg>
<div class="t" style="left:743.00px;top:56.00px;font-size:14.98px;line-height:14.98px;color:#9d9d9d;letter-spacing:0.309px">Manage Solution</div>
<svg style="left:1773px;top:54px" width="20" height="19" viewBox="0 0 20 19" fill="none" stroke="#cccccc" stroke-width="1.2"><path d="M7 9V1.5L18.5 7.5L11.5 11.5"/><ellipse cx="5.5" cy="13.5" rx="3" ry="3.8"/><path d="M2.5 13.5H0.5M8.5 13.5H10M2.8 10.5L1.2 9M8.2 10.5L9.8 9M2.8 16.5L1.2 18M8.2 16.5L9.8 18"/></svg>
<svg style="left:1797px;top:60px" width="11" height="6" viewBox="0 0 11 6"><path d="M0.5 0.5L5.5 5L10.5 0.5" stroke="#cccccc" stroke-width="1.2" fill="none"/></svg>
<svg style="left:1821px;top:55px" width="18" height="16" viewBox="0 0 18 16" fill="none" stroke="#cccccc" stroke-width="1.3"><rect x="0.7" y="0.7" width="16.6" height="14.6" rx="1.5"/><path d="M3.5 4H14.5M3.5 6.5H14.5M3.5 11H8.5"/><rect x="11" y="9.5" width="3.5" height="3" fill="#cccccc"/></svg>
<svg style="left:1852px;top:54px" width="18" height="18" viewBox="0 0 18 18" fill="none" stroke="#cccccc" stroke-width="1.3"><rect x="0.7" y="0.7" width="16.6" height="16.6" rx="2"/><path d="M0.7 9H17.3"/></svg>
<div class="a" style="left:1885.85px;top:60.6px;width:3.3px;height:3.3px;background:#cccccc;border-radius:50%"></div>
<div class="a" style="left:1890.6499999999999px;top:60.6px;width:3.3px;height:3.3px;background:#cccccc;border-radius:50%"></div>
<div class="a" style="left:1895.4499999999998px;top:60.6px;width:3.3px;height:3.3px;background:#cccccc;border-radius:50%"></div>
<div class="t" style="left:421.70px;top:90.00px;font-size:14.98px;line-height:14.98px;color:#a9a9a9;letter-spacing:-0.484px">D:</div>
<svg style="left:441.5px;top:91.5px" width="8" height="12" viewBox="0 0 8 12"><path d="M1 0.8L6.5 6L1 11.2" stroke="#a9a9a9" stroke-width="1.2" fill="none"/></svg>
<div class="t" style="left:455.00px;top:90.00px;font-size:14.98px;line-height:14.98px;color:#a9a9a9;letter-spacing:-0.694px">CMSIS-RTOS</div>
<svg style="left:546.5px;top:91.5px" width="8" height="12" viewBox="0 0 8 12"><path d="M1 0.8L6.5 6L1 11.2" stroke="#a9a9a9" stroke-width="1.2" fill="none"/></svg>
<div class="t" style="left:560.80px;top:90.00px;font-size:14.98px;line-height:14.98px;color:#a9a9a9;letter-spacing:-0.779px">V4.0 RES</div>
<svg style="left:625.5px;top:91.5px" width="8" height="12" viewBox="0 0 8 12"><path d="M1 0.8L6.5 6L1 11.2" stroke="#a9a9a9" stroke-width="1.2" fill="none"/></svg>
<div class="t" style="left:640.00px;top:90.00px;font-size:14.98px;line-height:14.98px;color:#a9a9a9;letter-spacing:0.071px">RTX5 All In One(2026-01-04)</div>
<svg style="left:840.5px;top:91.5px" width="8" height="12" viewBox="0 0 8 12"><path d="M1 0.8L6.5 6L1 11.2" stroke="#a9a9a9" stroke-width="1.2" fill="none"/></svg>
<div class="t" style="left:855.00px;top:90.00px;font-size:14.98px;line-height:14.98px;color:#a9a9a9;letter-spacing:-0.527px">User</div>
<svg style="left:890.5px;top:91.5px" width="8" height="12" viewBox="0 0 8 12"><path d="M1 0.8L6.5 6L1 11.2" stroke="#a9a9a9" stroke-width="1.2" fill="none"/></svg>
<svg style="left:907.7px;top:89.6px" width="14.3" height="15.5" viewBox="0 0 14 16" preserveAspectRatio="none"><path d="M13.68 5.6A7 8 0 1 0 13.68 10.4L9.48 10.4A3.1 4 0 1 1 9.48 5.6Z" fill="#0b6ba8"/></svg>
<div class="t" style="left:931.30px;top:90.00px;font-size:14.98px;line-height:14.98px;color:#a9a9a9;letter-spacing:-0.016px">main.c</div>
<svg style="left:981.5px;top:91.5px" width="8" height="12" viewBox="0 0 8 12"><path d="M1 0.8L6.5 6L1 11.2" stroke="#a9a9a9" stroke-width="1.2" fill="none"/></svg>
<div class="t" style="left:995.00px;top:90.00px;font-size:14.98px;line-height:14.98px;color:#a9a9a9;letter-spacing:0.447px">C/C++</div>
<svg style="left:1047px;top:91.5px" width="8" height="12" viewBox="0 0 8 12"><path d="M1 0.8L6.5 6L1 11.2" stroke="#a9a9a9" stroke-width="1.2" fill="none"/></svg>
<svg style="left:1061px;top:88px" width="19" height="18" viewBox="0 0 19 18" fill="none" stroke="#b180d7" stroke-width="1.3"><path d="M9.5 1L17.5 5V13L9.5 17L1.5 13V5Z"/><path d="M1.5 5L9.5 9L17.5 5M9.5 9V17" /></svg>
<div class="t" style="left:1083.80px;top:90.00px;font-size:14.98px;line-height:14.98px;color:#a9a9a9;letter-spacing:0.015px">AppTaskGUI(void *)</div>
<div class="t" style="left:425.10px;top:115.00px;font-family:'Liberation Mono',monospace;font-size:15.6px;line-height:15.6px;letter-spacing:-0.120px;color:#2b91af">230</div>
<div class="t" style="left:484.00px;top:115.00px;font-family:'Liberation Mono',monospace;font-size:15.6px;line-height:15.6px;letter-spacing:-0.120px;color:#569cd6">int</div>
<div class="t" style="left:511.72px;top:115.00px;font-family:'Liberation Mono',monospace;font-size:15.6px;line-height:15.6px;letter-spacing:-0.120px;color:#d4d4d4"> </div>
<div class="t" style="left:520.96px;top:115.00px;font-family:'Liberation Mono',monospace;font-size:15.6px;line-height:15.6px;letter-spacing:-0.120px;color:#dcdcaa">main</div>
<div class="t" style="left:557.92px;top:115.00px;font-family:'Liberation Mono',monospace;font-size:15.6px;line-height:15.6px;letter-spacing:-0.120px;color:#d4d4d4"> </div>
<div class="t" style="left:567.16px;top:115.00px;font-family:'Liberation Mono',monospace;font-size:15.6px;line-height:15.6px;letter-spacing:-0.120px;color:#ffd700">(</div>
<div class="t" style="left:576.40px;top:115.00px;font-family:'Liberation Mono',monospace;font-size:15.6px;line-height:15.6px;letter-spacing:-0.120px;color:#569cd6">void</div>
<div class="t" style="left:613.36px;top:115.00px;font-family:'Liberation Mono',monospace;font-size:15.6px;line-height:15.6px;letter-spacing:-0.120px;color:#ffd700">)</div>
<div class="a" style="left:404px;top:136.8px;width:1497px;height:4.5px;background:transparent;background:linear-gradient(#000000 0%, #000000dd 35%, #00000000 100%)"></div>
<div class="t" style="left:425.10px;top:142.00px;font-family:'Liberation Mono',monospace;font-size:15.6px;line-height:15.6px;letter-spacing:-0.120px;color:#2b91af">248</div>
<div class="t" style="left:484.00px;top:142.00px;font-family:'Liberation Mono',monospace;font-size:15.6px;line-height:15.6px;letter-spacing:-0.120px;color:#ffd700">}</div>
<div class="t" style="left:425.10px;top:165.00px;font-family:'Liberation Mono',monospace;font-size:15.6px;line-height:15.6px;letter-spacing:-0.120px;color:#2b91af">249</div>
<div class="t" style="left:425.10px;top:187.00px;font-family:'Liberation Mono',monospace;font-size:15.6px;line-height:15.6px;letter-spacing:-0.120px;color:#2b91af">250</div>
<div class="t" style="left:484.00px;top:187.00px;font-family:'Liberation Mono',monospace;font-size:15.6px;line-height:15.6px;letter-spacing:-0.120px;color:#57a64a">/*</div>
<div class="t" style="left:425.10px;top:210.00px;font-family:'Liberation Mono',monospace;font-size:15.6px;line-height:15.6px;letter-spacing:-0.120px;color:#2b91af">251</div>
<div class="t" style="left:484.00px;top:210.00px;font-family:'Liberation Mono',monospace;font-size:15.6px;line-height:15.6px;letter-spacing:-0.120px;color:#57a64a">*********************************************************************************************************</div>
<div class="t" style="left:425.10px;top:233.00px;font-family:'Liberation Mono',monospace;font-size:15.6px;line-height:15.6px;letter-spacing:-0.120px;color:#2b91af">252</div>
<div class="t" style="left:484.00px;top:233.00px;font-family:'Liberation Mono',monospace;font-size:15.6px;line-height:15.6px;letter-spacing:-0.120px;color:#57a64a">*   </div>
<svg style="left:521.56px;top:228.80px" width="15.8" height="17" viewBox="0 0 16 16" preserveAspectRatio="none"><path d="M2 2.5H14 M8 1V7 M1 7H15 M3 10V15H13V10Z M3 12.2H13 M3 3L1 6M13 3L15 6" stroke="#57a64a" stroke-width="1.25" fill="none"/></svg>
<div class="t" style="left:537.76px;top:233.00px;font-family:'Liberation Mono',monospace;font-size:15.6px;line-height:15.6px;letter-spacing:-0.120px;color:#57a64a"> </div>
<svg style="left:547.60px;top:228.80px" width="15.8" height="17" viewBox="0 0 16 16" preserveAspectRatio="none"><path d="M1 4H6 M4.0 1V15 M1 9L6 9 M7.5 2H15 M7.5 8H15 M7.5 14.5H15 M8.0 2V14.5 M14.5 2V14.5 M8.5 11H14" stroke="#57a64a" stroke-width="1.25" fill="none"/></svg>
<div class="t" style="left:563.80px;top:233.00px;font-family:'Liberation Mono',monospace;font-size:15.6px;line-height:15.6px;letter-spacing:-0.120px;color:#57a64a"> </div>
<svg style="left:573.64px;top:228.80px" width="15.8" height="17" viewBox="0 0 16 16" preserveAspectRatio="none"><path d="M2 2.5H14 M8 1V7 M1 7H15 M3 10V15H13V10Z M3 12.2H13" stroke="#57a64a" stroke-width="1.25" fill="none"/></svg>
<div class="t" style="left:589.84px;top:233.00px;font-family:'Liberation Mono',monospace;font-size:15.6px;line-height:15.6px;letter-spacing:-0.120px;color:#57a64a">: AppTaskGUI</div>
<div class="t" style="left:425.10px;top:256.00px;font-family:'Liberation Mono',monospace;font-size:15.6px;line-height:15.6px;letter-spacing:-0.120px;color:#2b91af">253</div>
<div class="t" style="left:484.00px;top:256.00px;font-family:'Liberation Mono',monospace;font-size:15.6px;line-height:15.6px;letter-spacing:-0.120px;color:#57a64a">*   </div>
<svg style="left:521.56px;top:251.80px" width="15.8" height="17" viewBox="0 0 16 16" preserveAspectRatio="none"><path d="M1 5H6 M4.0 1V15 M1 10L6 7 M7.5 2H15 M7.5 8H15 M7.5 14.5H15 M8.0 2V14.5 M14.5 2V14.5 M8.5 11H14" stroke="#57a64a" stroke-width="1.25" fill="none"/></svg>
<svg style="left:538.36px;top:251.80px" width="15.8" height="17" viewBox="0 0 16 16" preserveAspectRatio="none"><path d="M1 4H6 M4.0 1V15 M1 10L6 7 M7.5 2H15 M7.5 8H15 M7.5 14.5H15 M8.0 2V14.5 M14.5 2V14.5" stroke="#57a64a" stroke-width="1.25" fill="none"/></svg>
<svg style="left:555.16px;top:251.80px" width="15.8" height="17" viewBox="0 0 16 16" preserveAspectRatio="none"><path d="M1.5 2H14.5 M8 2V9 M1 9H15 M8 9L2 15.5M8 9L14.5 15.5 M3 5.5H11" stroke="#57a64a" stroke-width="1.25" fill="none"/></svg>
<svg style="left:571.96px;top:251.80px" width="15.8" height="17" viewBox="0 0 16 16" preserveAspectRatio="none"><path d="M1.5 2H14.5 M8 2V9 M1 9H15 M8 9L2 15.5M8 9L14.5 15.5 M3 5.5H11 M2 2V8M14 2V8" stroke="#57a64a" stroke-width="1.25" fill="none"/></svg>
<div class="t" style="left:588.16px;top:256.00px;font-family:'Liberation Mono',monospace;font-size:15.6px;line-height:15.6px;letter-spacing:-0.120px;color:#57a64a">: GUI</div>
<svg style="left:634.96px;top:251.80px" width="15.8" height="17" viewBox="0 0 16 16" preserveAspectRatio="none"><path d="M1 3H7 M4.5 1V15 M1 10L7 7 M8.5 2H15 M8.5 8H15 M8.5 14.5H15 M9.0 2V14.5 M14.5 2V14.5" stroke="#57a64a" stroke-width="1.25" fill="none"/></svg>
<svg style="left:651.76px;top:251.80px" width="15.8" height="17" viewBox="0 0 16 16" preserveAspectRatio="none"><path d="M1.5 2H14.5 M8 2V9 M1 9H15 M8 9L2 15.5M8 9L14.5 15.5 M3 5.5H11 M2 2V8M14 2V8" stroke="#57a64a" stroke-width="1.25" fill="none"/></svg>
<svg style="left:668.56px;top:251.80px" width="15.8" height="17" viewBox="0 0 16 16" preserveAspectRatio="none"><path d="M1.5 2H14.5 M8 2V9 M1 9H15 M8 9L2 15.5M8 9L14.5 15.5 M4 5.5H12 M2 2V8M14 2V8" stroke="#57a64a" stroke-width="1.25" fill="none"/></svg>
<svg style="left:685.36px;top:251.80px" width="15.8" height="17" viewBox="0 0 16 16" preserveAspectRatio="none"><path d="M1.5 2H14.5 M8 2V9 M1 9H15 M8 9L2 15.5M8 9L14.5 15.5 M3 5.5H11 M2 2V8M14 2V8" stroke="#57a64a" stroke-width="1.25" fill="none"/></svg>
<div class="t" style="left:425.10px;top:278.00px;font-family:'Liberation Mono',monospace;font-size:15.6px;line-height:15.6px;letter-spacing:-0.120px;color:#2b91af">254</div>
<div class="t" style="left:484.00px;top:278.00px;font-family:'Liberation Mono',monospace;font-size:15.6px;line-height:15.6px;letter-spacing:-0.120px;color:#57a64a">*   </div>
<svg style="left:521.56px;top:273.80px" width="15.8" height="17" viewBox="0 0 16 16" preserveAspectRatio="none"><path d="M2 2.5H14 M8 1V7 M1 7H15 M3 9V15H13V9Z M3 12.2H13" stroke="#57a64a" stroke-width="1.25" fill="none"/></svg>
<div class="t" style="left:537.76px;top:278.00px;font-family:'Liberation Mono',monospace;font-size:15.6px;line-height:15.6px;letter-spacing:-0.120px;color:#57a64a">    </div>
<svg style="left:575.32px;top:273.80px" width="15.8" height="17" viewBox="0 0 16 16" preserveAspectRatio="none"><path d="M1.5 2H14.5 M8 2V9 M1 9H15 M8 9L2 15.5M8 9L14.5 15.5 M3 5.5H13" stroke="#57a64a" stroke-width="1.25" fill="none"/></svg>
<div class="t" style="left:591.52px;top:278.00px;font-family:'Liberation Mono',monospace;font-size:15.6px;line-height:15.6px;letter-spacing:-0.120px;color:#57a64a">: </div>
<svg style="left:610.60px;top:273.80px" width="15.8" height="17" viewBox="0 0 16 16" preserveAspectRatio="none"><path d="M1 4H5 M3.5 1V15 M1 9L5 7 M6.5 2H15 M6.5 8H15 M6.5 14.5H15 M7.0 2V14.5 M14.5 2V14.5 M7.5 11H14" stroke="#57a64a" stroke-width="1.25" fill="none"/></svg>
<div class="t" style="left:425.10px;top:301.00px;font-family:'Liberation Mono',monospace;font-size:15.6px;line-height:15.6px;letter-spacing:-0.120px;color:#2b91af">255</div>
<div class="t" style="left:484.00px;top:301.00px;font-family:'Liberation Mono',monospace;font-size:15.6px;line-height:15.6px;letter-spacing:-0.120px;color:#57a64a">*   </div>
<svg style="left:521.56px;top:296.80px" width="15.8" height="17" viewBox="0 0 16 16" preserveAspectRatio="none"><path d="M1 3H6 M4.0 1V15 M1 10L6 8 M7.5 2H15 M7.5 8H15 M7.5 14.5H15 M8.0 2V14.5 M14.5 2V14.5 M8.5 11H14" stroke="#57a64a" stroke-width="1.25" fill="none"/></svg>
<div class="t" style="left:537.76px;top:301.00px;font-family:'Liberation Mono',monospace;font-size:15.6px;line-height:15.6px;letter-spacing:-0.120px;color:#57a64a"> </div>
<svg style="left:547.60px;top:296.80px" width="15.8" height="17" viewBox="0 0 16 16" preserveAspectRatio="none"><path d="M1.5 2H14.5 M8 2V9 M1 9H15 M8 9L2 15.5M8 9L14.5 15.5 M4 5.5H13" stroke="#57a64a" stroke-width="1.25" fill="none"/></svg>
<div class="t" style="left:563.80px;top:301.00px;font-family:'Liberation Mono',monospace;font-size:15.6px;line-height:15.6px;letter-spacing:-0.120px;color:#57a64a"> </div>
<svg style="left:573.64px;top:296.80px" width="15.8" height="17" viewBox="0 0 16 16" preserveAspectRatio="none"><path d="M1.5 2H14.5 M8 2V9 M1 9H15 M8 9L2 15.5M8 9L14.5 15.5 M3 5.5H13" stroke="#57a64a" stroke-width="1.25" fill="none"/></svg>
<div class="t" style="left:589.84px;top:301.00px;font-family:'Liberation Mono',monospace;font-size:15.6px;line-height:15.6px;letter-spacing:-0.120px;color:#57a64a">: </div>
<svg style="left:608.92px;top:296.80px" width="15.8" height="17" viewBox="0 0 16 16" preserveAspectRatio="none"><path d="M1 4H5 M3.5 1V15 M1 9L5 7 M6.5 2H15 M6.5 8H15 M6.5 14.5H15 M7.0 2V14.5 M14.5 2V14.5 M7.5 11H14" stroke="#57a64a" stroke-width="1.25" fill="none"/></svg>
<div class="t" style="left:425.10px;top:324.00px;font-family:'Liberation Mono',monospace;font-size:15.6px;line-height:15.6px;letter-spacing:-0.120px;color:#2b91af">256</div>
<div class="t" style="left:484.00px;top:324.00px;font-family:'Liberation Mono',monospace;font-size:15.6px;line-height:15.6px;letter-spacing:-0.120px;color:#57a64a">*   </div>
<svg style="left:521.56px;top:319.80px" width="15.8" height="17" viewBox="0 0 16 16" preserveAspectRatio="none"><path d="M1.5 2H14.5 M8 2V9 M1 9H15 M8 9L2 15.5M8 9L14.5 15.5 M3 5.5H11" stroke="#57a64a" stroke-width="1.25" fill="none"/></svg>
<div class="t" style="left:537.76px;top:324.00px;font-family:'Liberation Mono',monospace;font-size:15.6px;line-height:15.6px;letter-spacing:-0.120px;color:#57a64a"> </div>
<svg style="left:547.60px;top:319.80px" width="15.8" height="17" viewBox="0 0 16 16" preserveAspectRatio="none"><path d="M1 3H6 M4.0 1V15 M1 11L6 9 M7.5 2H15 M7.5 8H15 M7.5 14.5H15 M8.0 2V14.5 M14.5 2V14.5" stroke="#57a64a" stroke-width="1.25" fill="none"/></svg>
<div class="t" style="left:563.80px;top:324.00px;font-family:'Liberation Mono',monospace;font-size:15.6px;line-height:15.6px;letter-spacing:-0.120px;color:#57a64a"> </div>
<svg style="left:573.64px;top:319.80px" width="15.8" height="17" viewBox="0 0 16 16" preserveAspectRatio="none"><path d="M1 3H6 M4.0 1V15 M1 10L6 8 M7.5 2H15 M7.5 8H15 M7.5 14.5H15 M8.0 2V14.5 M14.5 2V14.5" stroke="#57a64a" stroke-width="1.25" fill="none"/></svg>
<div class="t" style="left:589.84px;top:324.00px;font-family:'Liberation Mono',monospace;font-size:15.6px;line-height:15.6px;letter-spacing:-0.120px;color:#57a64a">: osPriorityNormal  </div>
<div class="t" style="left:776.14px;top:324.00px;font-family:'Liberation Mono',monospace;font-size:15.6px;line-height:15.6px;color:#57a64a">(</div>
<svg style="left:783.64px;top:319.80px" width="15.8" height="17" viewBox="0 0 16 16" preserveAspectRatio="none"><path d="M1 4H6 M4.0 1V15 M1 9L6 9 M7.5 2H15 M7.5 8H15 M7.5 14.5H15 M8.0 2V14.5 M14.5 2V14.5 M8.5 11H14" stroke="#57a64a" stroke-width="1.25" fill="none"/></svg>
<svg style="left:800.44px;top:319.80px" width="15.8" height="17" viewBox="0 0 16 16" preserveAspectRatio="none"><path d="M1.5 2H14.5 M8 2V9 M1 9H15 M8 9L2 15.5M8 9L14.5 15.5 M3 5.5H13" stroke="#57a64a" stroke-width="1.25" fill="none"/></svg>
<svg style="left:817.24px;top:319.80px" width="15.8" height="17" viewBox="0 0 16 16" preserveAspectRatio="none"><path d="M2 2.5H14 M8 1V7 M1 7H15 M3 10V15H13V10Z M3 12.2H13" stroke="#57a64a" stroke-width="1.25" fill="none"/></svg>
<svg style="left:834.04px;top:319.80px" width="15.8" height="17" viewBox="0 0 16 16" preserveAspectRatio="none"><path d="M1 5H5 M3.5 1V15 M1 10L5 8 M6.5 2H15 M6.5 8H15 M6.5 14.5H15 M7.0 2V14.5 M14.5 2V14.5 M7.5 11H14" stroke="#57a64a" stroke-width="1.25" fill="none"/></svg>
<svg style="left:850.84px;top:319.80px" width="15.8" height="17" viewBox="0 0 16 16" preserveAspectRatio="none"><path d="M1.5 2H14.5 M8 2V9 M1 9H15 M8 9L2 15.5M8 9L14.5 15.5 M3 5.5H11" stroke="#57a64a" stroke-width="1.25" fill="none"/></svg>
<svg style="left:867.64px;top:319.80px" width="15.8" height="17" viewBox="0 0 16 16" preserveAspectRatio="none"><path d="M1 3H6 M4.0 1V15 M1 11L6 9 M7.5 2H15 M7.5 8H15 M7.5 14.5H15 M8.0 2V14.5 M14.5 2V14.5" stroke="#57a64a" stroke-width="1.25" fill="none"/></svg>
<svg style="left:884.44px;top:319.80px" width="15.8" height="17" viewBox="0 0 16 16" preserveAspectRatio="none"><path d="M1 3H6 M4.0 1V15 M1 10L6 8 M7.5 2H15 M7.5 8H15 M7.5 14.5H15 M8.0 2V14.5 M14.5 2V14.5" stroke="#57a64a" stroke-width="1.25" fill="none"/></svg>
<svg style="left:901.24px;top:319.80px" width="15.8" height="17" viewBox="0 0 16 16" preserveAspectRatio="none"><path d="M2 2.5H14 M8 1V7 M1 7H15 M3 10V15H13V10Z M3 12.2H13" stroke="#57a64a" stroke-width="1.25" fill="none"/></svg>
<svg style="left:918.04px;top:319.80px" width="15.8" height="17" viewBox="0 0 16 16" preserveAspectRatio="none"><path d="M2 2.5H14 M8 1V7 M1 7H15 M3 9V15H13V9Z M3 12.2H13 M3 3L1 6M13 3L15 6" stroke="#57a64a" stroke-width="1.25" fill="none"/></svg>
<svg style="left:934.24px;top:331.00px" width="8" height="7" viewBox="0 0 8 7"><path d="M2.5 0.5Q4.5 1.5 3 6" stroke="#57a64a" stroke-width="1.8" fill="none"/></svg>
<svg style="left:951.64px;top:319.80px" width="15.8" height="17" viewBox="0 0 16 16" preserveAspectRatio="none"><path d="M2 2.5H14 M8 1V7 M1 7H15 M3 9V15H13V9Z M3 12.2H13 M3 3L1 6M13 3L15 6" stroke="#57a64a" stroke-width="1.25" fill="none"/></svg>
<svg style="left:968.44px;top:319.80px" width="15.8" height="17" viewBox="0 0 16 16" preserveAspectRatio="none"><path d="M1 4H7 M4.5 1V15 M1 10L7 8 M8.5 2H15 M8.5 8H15 M8.5 14.5H15 M9.0 2V14.5 M14.5 2V14.5" stroke="#57a64a" stroke-width="1.25" fill="none"/></svg>
<svg style="left:985.24px;top:319.80px" width="15.8" height="17" viewBox="0 0 16 16" preserveAspectRatio="none"><path d="M1.5 2H14.5 M8 2V9 M1 9H15 M8 9L2 15.5M8 9L14.5 15.5 M5 5.5H13 M2 2V8M14 2V8" stroke="#57a64a" stroke-width="1.25" fill="none"/></svg>
<div class="t" style="left:1001.44px;top:324.00px;font-family:'Liberation Mono',monospace;font-size:15.6px;line-height:15.6px;letter-spacing:-0.120px;color:#57a64a">uCOS</div>
<svg style="left:1039.00px;top:319.80px" width="15.8" height="17" viewBox="0 0 16 16" preserveAspectRatio="none"><path d="M1.5 2H14.5 M8 2V9 M1 9H15 M8 9L2 15.5M8 9L14.5 15.5 M4 5.5H11 M2 2V8M14 2V8" stroke="#57a64a" stroke-width="1.25" fill="none"/></svg>
<svg style="left:1055.80px;top:319.80px" width="15.8" height="17" viewBox="0 0 16 16" preserveAspectRatio="none"><path d="M2 2.5H14 M8 1V7 M1 7H15 M3 9V15H13V9Z M3 12.2H13 M3 3L1 6M13 3L15 6" stroke="#57a64a" stroke-width="1.25" fill="none"/></svg>
<div class="t" style="left:1073.50px;top:324.00px;font-family:'Liberation Mono',monospace;font-size:15.6px;line-height:15.6px;color:#57a64a">)</div>
<div class="t" style="left:425.10px;top:347.00px;font-family:'Liberation Mono',monospace;font-size:15.6px;line-height:15.6px;letter-spacing:-0.120px;color:#2b91af">257</div>
<div class="t" style="left:484.00px;top:347.00px;font-family:'Liberation Mono',monospace;font-size:15.6px;line-height:15.6px;letter-spacing:-0.120px;color:#57a64a">*********************************************************************************************************</div>
<div class="t" style="left:425.10px;top:370.00px;font-family:'Liberation Mono',monospace;font-size:15.6px;line-height:15.6px;letter-spacing:-0.120px;color:#2b91af">258</div>
<div class="t" style="left:484.00px;top:370.00px;font-family:'Liberation Mono',monospace;font-size:15.6px;line-height:15.6px;letter-spacing:-0.120px;color:#57a64a">*/</div>
<div class="t" style="left:425.10px;top:392.00px;font-family:'Liberation Mono',monospace;font-size:15.6px;line-height:15.6px;letter-spacing:-0.120px;color:#2b91af">259</div>
<div class="t" style="left:484.00px;top:392.00px;font-family:'Liberation Mono',monospace;font-size:15.6px;line-height:15.6px;letter-spacing:-0.120px;color:#569cd6">void</div>
<div class="t" style="left:520.96px;top:392.00px;font-family:'Liberation Mono',monospace;font-size:15.6px;line-height:15.6px;letter-spacing:-0.120px;color:#d4d4d4"> </div>
<div class="t" style="left:530.20px;top:392.00px;font-family:'Liberation Mono',monospace;font-size:15.6px;line-height:15.6px;letter-spacing:-0.120px;color:#dcdcaa">AppTaskGUI</div>
<div class="t" style="left:622.60px;top:392.00px;font-family:'Liberation Mono',monospace;font-size:15.6px;line-height:15.6px;letter-spacing:-0.120px;color:#ffd700">(</div>
<div class="t" style="left:631.84px;top:392.00px;font-family:'Liberation Mono',monospace;font-size:15.6px;line-height:15.6px;letter-spacing:-0.120px;color:#569cd6">void</div>
<div class="t" style="left:668.80px;top:392.00px;font-family:'Liberation Mono',monospace;font-size:15.6px;line-height:15.6px;letter-spacing:-0.120px;color:#d4d4d4"> </div>
<div class="t" style="left:678.04px;top:392.00px;font-family:'Liberation Mono',monospace;font-size:15.6px;line-height:15.6px;letter-spacing:-0.120px;color:#9a9a9a">*argument</div>
<div class="t" style="left:761.20px;top:392.00px;font-family:'Liberation Mono',monospace;font-size:15.6px;line-height:15.6px;letter-spacing:-0.120px;color:#ffd700">)</div>
<div class="a" style="left:1903px;top:111px;width:1px;height:302px;background:#2b2b2b"></div>
<div class="a" style="left:1914.5px;top:132px;width:5.5px;height:6px;background:#d21919"></div>
<div class="a" style="left:1904px;top:202px;width:16px;height:2px;background:#8c8c8c"></div>
<div class="a" style="left:402px;top:413px;width:1518px;height:1px;background:#3a3a3a"></div>
<!-- ============ PANEL ============ -->
<div class="t" style="left:426.25px;top:429.00px;font-size:12.67px;line-height:12.67px;color:#9d9d9d;letter-spacing:-0.824px">PROBLEMS</div>
<div class="t" style="left:540.75px;top:429.00px;font-size:12.67px;line-height:12.67px;color:#9d9d9d;letter-spacing:-0.464px">OUTPUT</div>
<div class="t" style="left:619.25px;top:429.00px;font-size:12.67px;line-height:12.67px;color:#9d9d9d;letter-spacing:-0.648px">DEBUG CONSOLE</div>
<div class="t" style="left:750.75px;top:429.00px;font-size:12.67px;line-height:12.67px;color:#9d9d9d;letter-spacing:-0.438px">TERMINAL</div>
<div class="t" style="left:841.25px;top:429.00px;font-size:12.67px;line-height:12.67px;color:#9d9d9d;letter-spacing:-1.175px">PORTS</div>
<div class="t" style="left:907.50px;top:429.00px;font-size:12.67px;line-height:12.67px;color:#e7e7e7;letter-spacing:-0.329px">SERIAL MONITOR</div>
<div class="t" style="left:1039.50px;top:429.00px;font-size:12.67px;line-height:12.67px;color:#9d9d9d;letter-spacing:-0.289px">MEMORY</div>
<div class="t" style="left:1123.25px;top:429.00px;font-size:12.67px;line-height:12.67px;color:#9d9d9d;letter-spacing:-1.031px">XRTOS</div>
<div class="a" style="left:495px;top:425px;width:19px;height:19px;background:#007acc;border-radius:50%"></div>
<div class="t" style="left:495.00px;top:429.00px;font-size:12.0px;line-height:12.0px;color:#ffffff;width:19px;text-align:center">4</div>
<div class="a" style="left:905px;top:447px;width:108px;height:1.3px;background:#e7e7e7"></div>
<svg style="left:1853.5px;top:426.5px" width="16" height="15" viewBox="0 0 16 15" fill="none" stroke="#cccccc" stroke-width="1.4"><path d="M0.7 4.5V0.7H4.5M11.5 0.7H15.3V4.5M15.3 10.5V14.3H11.5M4.5 14.3H0.7V10.5"/></svg>
<svg style="left:1886px;top:428.5px" width="13" height="12" viewBox="0 0 13 12"><path d="M0.7 0.5L12.3 11.5M12.3 0.5L0.7 11.5" stroke="#cccccc" stroke-width="1.3"/></svg>
<div class="a" style="left:409.2px;top:457px;width:231.6px;height:31.7px;background:#0e639c;border-radius:2px"></div>
<svg style="left:417.5px;top:465px" width="16" height="16" viewBox="0 0 16 16"><path d="M8 0.5V15.5M0.5 8H15.5" stroke="#ffffff" stroke-width="1.5"/></svg>
<div class="t" style="left:438.30px;top:466.00px;font-size:15.55px;line-height:15.55px;color:#ffffff;letter-spacing:0.374px">Open an additional monitor</div>
<div class="t" style="left:412.00px;top:505.00px;font-size:14.98px;line-height:14.98px;letter-spacing:0.707px">Monitor Mode</div>
<div class="a" style="left:522.2px;top:496.2px;width:92.79999999999995px;height:30.599999999999966px;background:#3c3c3c;border-radius:2px"></div>
<div class="t" style="left:532.50px;top:505.00px;font-size:14.98px;line-height:14.98px;color:#f0f0f0;letter-spacing:-0.330px">Serial</div>
<svg style="left:585px;top:506.3px" width="19" height="10" viewBox="0 0 19 10"><path d="M0.8 0.8L9.5 9.2L18.2 0.8" stroke="#cccccc" stroke-width="1.4" fill="none"/></svg>
<div class="t" style="left:624.70px;top:505.00px;font-size:14.98px;line-height:14.98px;letter-spacing:0.413px">View Mode</div>
<div class="a" style="left:712.1px;top:496.2px;width:89.60000000000002px;height:30.599999999999966px;background:#3c3c3c;border-radius:2px"></div>
<div class="t" style="left:722.40px;top:505.00px;font-size:14.98px;line-height:14.98px;color:#f0f0f0;letter-spacing:-0.038px">Text</div>
<svg style="left:772px;top:506.3px" width="19" height="10" viewBox="0 0 19 10"><path d="M0.8 0.8L9.5 9.2L18.2 0.8" stroke="#cccccc" stroke-width="1.4" fill="none"/></svg>
<div class="t" style="left:811.40px;top:505.00px;font-size:14.98px;line-height:14.98px;letter-spacing:0.287px">Port</div>
<div class="a" style="left:849px;top:496.2px;width:417.79999999999995px;height:30.599999999999966px;background:#3c3c3c;border-radius:2px"></div>
<div class="t" style="left:860.00px;top:505.00px;font-size:14.98px;line-height:14.98px;color:#f0f0f0;letter-spacing:0.283px">COM5 - com0com - serial port emulator (COM5)</div>
<svg style="left:1208px;top:506.3px" width="19" height="10" viewBox="0 0 19 10"><path d="M0.8 0.8L9.5 9.2L18.2 0.8" stroke="#cccccc" stroke-width="1.4" fill="none"/></svg>
<svg style="left:1241px;top:502px" width="18" height="18" viewBox="0 0 18 18" fill="none" stroke="#cccccc" stroke-width="1.5"><path d="M11.5 2.7A7.2 7.2 0 1 1 3.6 5.4L6.6 2.6"/><path d="M2 2.7H6.7V7.2"/></svg>
<div class="t" style="left:1277.00px;top:505.00px;font-size:14.98px;line-height:14.98px;letter-spacing:0.042px">Baud rate</div>
<div class="a" style="left:1352px;top:496.2px;width:107px;height:30.599999999999966px;background:#3c3c3c;border-radius:2px"></div>
<div class="t" style="left:1363.50px;top:505.00px;font-size:14.98px;line-height:14.98px;color:#f0f0f0;letter-spacing:0.109px">115200</div>
<svg style="left:1428.8px;top:506.3px" width="19" height="10" viewBox="0 0 19 10"><path d="M0.8 0.8L9.5 9.2L18.2 0.8" stroke="#cccccc" stroke-width="1.4" fill="none"/></svg>
<div class="t" style="left:1469.00px;top:505.00px;font-size:14.98px;line-height:14.98px;letter-spacing:0.189px">Line ending</div>
<div class="a" style="left:1558px;top:496.2px;width:94px;height:30.599999999999966px;background:#3c3c3c;border-radius:2px"></div>
<div class="t" style="left:1569.40px;top:505.00px;font-size:14.98px;line-height:14.98px;color:#f0f0f0;letter-spacing:0.201px">None</div>
<svg style="left:1622px;top:506.3px" width="19" height="10" viewBox="0 0 19 10"><path d="M0.8 0.8L9.5 9.2L18.2 0.8" stroke="#cccccc" stroke-width="1.4" fill="none"/></svg>
<div class="a" style="left:409.2px;top:532px;width:151.6px;height:30.8px;background:#0e639c;border-radius:2px"></div>
<svg style="left:420.8px;top:540.5px" width="12" height="15" viewBox="0 0 12 15"><path d="M1.2 1.2V13.8L10.8 7.5Z" stroke="#ffffff" stroke-width="2.1" fill="none" stroke-linejoin="round"/></svg>
<div class="t" style="left:438.30px;top:541.00px;font-size:15.55px;line-height:15.55px;color:#ffffff;letter-spacing:0.353px">Start Monitoring</div>
<svg style="left:573px;top:540.5px" width="18" height="14" viewBox="0 0 18 14" fill="none" stroke="#cccccc" stroke-width="1.3"><path d="M0 1H17.5M0 5H17.5M0 9H9M0 13H9M11.5 8.5L16.5 13.5M16.5 8.5L11.5 13.5"/></svg>
<div class="a" style="left:602px;top:532.2px;width:30.8px;height:30.7px;background:#1177c4;border-radius:5px"></div>
<div class="a" style="left:710px;top:532.2px;width:30.8px;height:30.7px;background:#1177c4;border-radius:5px"></div>
<div class="a" style="left:746px;top:532.2px;width:30.8px;height:30.7px;background:#1177c4;border-radius:5px"></div>
<div class="a" style="left:782.1px;top:532.2px;width:30.8px;height:37px;background:#1177c4;border-radius:5px 5px 0 0"></div>
<svg style="left:608.5px;top:538.5px" width="18" height="18" viewBox="0 0 18 18"><text x="0" y="7.5" font-family="Liberation Sans" font-weight="bold" font-size="8.5" fill="#fff">ab</text><text x="0" y="16" font-family="Liberation Sans" font-weight="bold" font-size="8.5" fill="#fff">c</text><path d="M16.5 7V12.5H7.5M10.5 9.5L7.5 12.5L10.5 15.5" stroke="#fff" stroke-width="1.5" fill="none"/></svg>
<svg style="left:645px;top:539px" width="17" height="17" viewBox="0 0 17 17" fill="none" stroke="#cccccc" stroke-width="1.3"><path d="M1 16L4.5 12.5M16 1L12.5 4.5"/><path d="M4 9L8 13L6.5 14.5A2.8 2.8 0 0 1 2.5 10.5Z"/><path d="M13 8L9 4L10.5 2.5A2.8 2.8 0 0 1 14.5 6.5Z"/><path d="M6 8L7.5 6.5M9 11L10.5 9.5"/></svg>
<svg style="left:681px;top:539.5px" width="18" height="17" viewBox="0 0 18 17" fill="none" stroke="#cccccc" stroke-width="1.3"><rect x="0.7" y="0.7" width="16.6" height="15.6"/><path d="M6.5 4.5L10.5 8.5L6.5 12.5"/></svg>
<svg style="left:718px;top:539px" width="15" height="17" viewBox="0 0 15 17"><path d="M4 0.5H11L11.5 3.5M4 0.5L3.5 3.5M4 16.5H11L11.5 13.5M4 16.5L3.5 13.5" stroke="#fff" stroke-width="1.6" fill="#fff"/><circle cx="7.5" cy="8.5" r="5.8" stroke="#fff" stroke-width="1.6" fill="#1177c4"/><path d="M7.5 5.5V9H10" stroke="#fff" stroke-width="1.4" fill="none"/></svg>
<svg style="left:752.5px;top:540px" width="18" height="16" viewBox="0 0 18 16" fill="none" stroke="#fff" stroke-width="1.6"><path d="M2.5 5.5A6.5 6.5 0 0 1 14.5 4"/><path d="M15.5 10.5A6.5 6.5 0 0 1 3.5 12"/><path d="M1 2V6H5M17 14V10H13"/><circle cx="9" cy="8" r="0.9" fill="#fff" stroke="none"/></svg>
<svg style="left:787.5px;top:537.5px" width="20" height="20" viewBox="0 0 20 20"><path d="M16.22 7.80L16.45 8.59L18.87 8.45L18.87 11.55L16.45 11.41L15.96 12.85L15.56 13.56L17.36 15.18L15.18 17.36L13.56 15.56L12.20 16.22L11.41 16.45L11.55 18.87L8.45 18.87L8.59 16.45L7.15 15.96L6.44 15.56L4.82 17.36L2.64 15.18L4.44 13.56L3.78 12.20L3.55 11.41L1.13 11.55L1.13 8.45L3.55 8.59L4.04 7.15L4.44 6.44L2.64 4.82L4.82 2.64L6.44 4.44L7.80 3.78L8.59 3.55L8.45 1.13L11.55 1.13L11.41 3.55L12.85 4.04L13.56 4.44L15.18 2.64L17.36 4.82L15.56 6.44Z" fill="none" stroke="#fff" stroke-width="1.7" stroke-linejoin="round"/><circle cx="10" cy="10" r="2.6" fill="none" stroke="#fff" stroke-width="1.7"/></svg>
<div class="a" style="left:403px;top:568px;width:1514.5px;height:1px;background:#1177c4"></div>
<div class="a" style="left:403px;top:568px;width:1.2px;height:41px;background:#1177c4"></div>
<div class="a" style="left:1917px;top:568px;width:1.3px;height:41px;background:#1177c4"></div>
<div class="a" style="left:403px;top:609px;width:1517px;height:1px;background:#3b3b3b"></div>
<div class="t" style="left:412.00px;top:583.00px;font-size:14.98px;line-height:14.98px;letter-spacing:0.136px">Data bits</div>
<div class="a" style="left:482.3px;top:573.3px;width:64.69999999999999px;height:31.300000000000068px;background:#3c3c3c;border-radius:2px"></div>
<div class="t" style="left:492.70px;top:583.00px;font-size:14.98px;line-height:14.98px;color:#f0f0f0;letter-spacing:0.672px">8</div>
<svg style="left:517px;top:583.75px" width="19" height="10" viewBox="0 0 19 10"><path d="M0.8 0.8L9.5 9.2L18.2 0.8" stroke="#cccccc" stroke-width="1.4" fill="none"/></svg>
<div class="t" style="left:556.70px;top:583.00px;font-size:14.98px;line-height:14.98px;letter-spacing:0.194px">Stop bits</div>
<div class="a" style="left:626px;top:573.3px;width:65px;height:31.300000000000068px;background:#3c3c3c;border-radius:2px"></div>
<div class="t" style="left:638.00px;top:583.00px;font-size:14.98px;line-height:14.98px;color:#f0f0f0;letter-spacing:-0.828px">1</div>
<svg style="left:661.5px;top:583.75px" width="19" height="10" viewBox="0 0 19 10"><path d="M0.8 0.8L9.5 9.2L18.2 0.8" stroke="#cccccc" stroke-width="1.4" fill="none"/></svg>
<div class="t" style="left:700.60px;top:583.00px;font-size:14.98px;line-height:14.98px;letter-spacing:-0.061px">Parity</div>
<div class="a" style="left:748px;top:573.3px;width:93.70000000000005px;height:31.300000000000068px;background:#3c3c3c;border-radius:2px"></div>
<div class="t" style="left:759.40px;top:583.00px;font-size:14.98px;line-height:14.98px;color:#f0f0f0;letter-spacing:0.201px">None</div>
<svg style="left:812px;top:583.75px" width="19" height="10" viewBox="0 0 19 10"><path d="M0.8 0.8L9.5 9.2L18.2 0.8" stroke="#cccccc" stroke-width="1.4" fill="none"/></svg>
<div class="a" style="left:854.2px;top:579.2px;width:18.6px;height:19.6px;background:#3c3c3c;border-radius:3px"></div>
<svg style="left:857.7px;top:583.5px" width="12" height="10" viewBox="0 0 12 10"><path d="M0.8 5.2L4.2 8.5L11.2 1.2" stroke="#fff" stroke-width="1.5" fill="none"/></svg>
<div class="a" style="left:915px;top:579.2px;width:18.6px;height:19.6px;background:#3c3c3c;border-radius:3px"></div>
<svg style="left:918.5px;top:583.5px" width="12" height="10" viewBox="0 0 12 10"><path d="M0.8 5.2L4.2 8.5L11.2 1.2" stroke="#fff" stroke-width="1.5" fill="none"/></svg>
<div class="t" style="left:878.00px;top:583.00px;font-size:14.98px;line-height:14.98px;letter-spacing:-0.922px">DTR</div>
<div class="t" style="left:939.40px;top:583.00px;font-size:14.98px;line-height:14.98px;letter-spacing:-1.891px">RTS</div>
<div class="a" style="left:978.1px;top:573.3px;width:194.6px;height:31.3px;background:#0e639c;border-radius:2px"></div>
<div class="t" style="left:985.40px;top:582.00px;font-size:14.98px;line-height:14.98px;color:#ffffff;letter-spacing:0.301px">Choose Log File Directory</div>
<svg style="left:1187px;top:580px" width="15" height="17" viewBox="0 0 15 17" fill="none" stroke="#8b8b8b" stroke-width="1.3"><path d="M0.7 2A1.3 1.3 0 0 1 2 0.7H9L14.3 6V15A1.3 1.3 0 0 1 13 16.3H2A1.3 1.3 0 0 1 0.7 15Z"/><path d="M9 0.7V6H14.3"/></svg>
<svg style="left:1221px;top:580px" width="19" height="17" viewBox="0 0 19 17" fill="none" stroke="#8b8b8b" stroke-width="1.3"><path d="M5 6.5V15A1.3 1.3 0 0 1 6.3 16.3H16.7A1.3 1.3 0 0 1 18 15V6L13 0.7H9.5"/><path d="M13 0.7V6H18"/><path d="M0.8 7V5A2.5 2.5 0 0 1 3.3 2.5H7.5M5.5 0.5L7.5 2.5L5.5 4.5"/></svg>
<div class="t" style="left:426.00px;top:617.00px;font-size:15.6px;line-height:15.6px;font-family:'Liberation Mono',monospace;color:#d4d4d4;letter-spacing:0;letter-spacing:-0.12px">---- Opened the serial port COM5 ----</div>
<div class="t" style="left:426.00px;top:637.00px;font-size:15.6px;line-height:15.6px;font-family:'Liberation Mono',monospace;color:#d4d4d4;letter-spacing:0;letter-spacing:-0.12px">Allocated 4064 bytes for CANopen objects</div>
<div class="t" style="left:426.00px;top:657.00px;font-size:15.6px;line-height:15.6px;font-family:'Liberation Mono',monospace;color:#d4d4d4;letter-spacing:0;letter-spacing:-0.12px">CANopenNode - Reset communication...</div>
<div class="t" style="left:426.00px;top:677.00px;font-size:15.6px;line-height:15.6px;font-family:'Liberation Mono',monospace;color:#d4d4d4;letter-spacing:0;letter-spacing:-0.12px">CANopenNode - Running...</div>
<div class="t" style="left:426.00px;top:717.00px;font-size:15.6px;line-height:15.6px;font-family:'Liberation Mono',monospace;color:#d4d4d4;letter-spacing:0;letter-spacing:-0.12px">------------------------------------------------</div>
<div class="a" style="left:428.20px;top:737.40px;width:10.6px;height:10.6px;background:#d8d8d8;transform:rotate(45deg)"></div>
<div class="a" style="left:437.16px;top:737.40px;width:10.6px;height:10.6px;background:#d8d8d8;transform:rotate(45deg)"></div>
<div class="a" style="left:455.09px;top:737.40px;width:10.6px;height:10.6px;background:#d8d8d8;transform:rotate(45deg)"></div>
<div class="a" style="left:481.98px;top:737.40px;width:10.6px;height:10.6px;background:#d8d8d8;transform:rotate(45deg)"></div>
<div class="a" style="left:490.94px;top:737.40px;width:10.6px;height:10.6px;background:#d8d8d8;transform:rotate(45deg)"></div>
<div class="a" style="left:499.90px;top:737.40px;width:10.6px;height:10.6px;background:#d8d8d8;transform:rotate(45deg)"></div>
<div class="a" style="left:508.87px;top:737.40px;width:10.6px;height:10.6px;background:#d8d8d8;transform:rotate(45deg)"></div>
<div class="a" style="left:517.83px;top:737.40px;width:10.6px;height:10.6px;background:#d8d8d8;transform:rotate(45deg)"></div>
<div class="a" style="left:526.79px;top:737.40px;width:10.6px;height:10.6px;background:#d8d8d8;transform:rotate(45deg)"></div>
<div class="a" style="left:535.76px;top:737.40px;width:10.6px;height:10.6px;background:#d8d8d8;transform:rotate(45deg)"></div>
<div class="a" style="left:553.68px;top:737.40px;width:10.6px;height:10.6px;background:#d8d8d8;transform:rotate(45deg)"></div>
<div class="a" style="left:562.64px;top:737.40px;width:10.6px;height:10.6px;background:#d8d8d8;transform:rotate(45deg)"></div>
<div class="a" style="left:571.61px;top:737.40px;width:10.6px;height:10.6px;background:#d8d8d8;transform:rotate(45deg)"></div>
<div class="a" style="left:589.53px;top:737.40px;width:10.6px;height:10.6px;background:#d8d8d8;transform:rotate(45deg)"></div>
<div class="a" style="left:598.50px;top:737.40px;width:10.6px;height:10.6px;background:#d8d8d8;transform:rotate(45deg)"></div>
<div class="a" style="left:607.46px;top:737.40px;width:10.6px;height:10.6px;background:#d8d8d8;transform:rotate(45deg)"></div>
<div class="a" style="left:625.39px;top:737.40px;width:10.6px;height:10.6px;background:#d8d8d8;transform:rotate(45deg)"></div>
<div class="a" style="left:634.35px;top:737.40px;width:10.6px;height:10.6px;background:#d8d8d8;transform:rotate(45deg)"></div>
<div class="a" style="left:652.27px;top:737.40px;width:10.6px;height:10.6px;background:#d8d8d8;transform:rotate(45deg)"></div>
<div class="a" style="left:661.24px;top:737.40px;width:10.6px;height:10.6px;background:#d8d8d8;transform:rotate(45deg)"></div>
<div class="a" style="left:670.20px;top:737.40px;width:10.6px;height:10.6px;background:#d8d8d8;transform:rotate(45deg)"></div>
<div class="t" style="left:430.20px;top:739.00px;font-size:12.0px;line-height:12.0px;color:#5c5c5c;letter-spacing:0">?</div>
<div class="t" style="left:439.16px;top:739.00px;font-size:12.0px;line-height:12.0px;color:#5c5c5c;letter-spacing:0">?</div>
<div class="t" style="left:457.09px;top:739.00px;font-size:12.0px;line-height:12.0px;color:#5c5c5c;letter-spacing:0">?</div>
<div class="t" style="left:483.98px;top:739.00px;font-size:12.0px;line-height:12.0px;color:#5c5c5c;letter-spacing:0">?</div>
<div class="t" style="left:492.94px;top:739.00px;font-size:12.0px;line-height:12.0px;color:#5c5c5c;letter-spacing:0">?</div>
<div class="t" style="left:501.90px;top:739.00px;font-size:12.0px;line-height:12.0px;color:#5c5c5c;letter-spacing:0">?</div>
<div class="t" style="left:510.87px;top:739.00px;font-size:12.0px;line-height:12.0px;color:#5c5c5c;letter-spacing:0">?</div>
<div class="t" style="left:519.83px;top:739.00px;font-size:12.0px;line-height:12.0px;color:#5c5c5c;letter-spacing:0">?</div>
<div class="t" style="left:528.79px;top:739.00px;font-size:12.0px;line-height:12.0px;color:#5c5c5c;letter-spacing:0">?</div>
<div class="t" style="left:537.76px;top:739.00px;font-size:12.0px;line-height:12.0px;color:#5c5c5c;letter-spacing:0">?</div>
<div class="t" style="left:555.68px;top:739.00px;font-size:12.0px;line-height:12.0px;color:#5c5c5c;letter-spacing:0">?</div>
<div class="t" style="left:564.64px;top:739.00px;font-size:12.0px;line-height:12.0px;color:#5c5c5c;letter-spacing:0">?</div>
<div class="t" style="left:573.61px;top:739.00px;font-size:12.0px;line-height:12.0px;color:#5c5c5c;letter-spacing:0">?</div>
<div class="t" style="left:591.53px;top:739.00px;font-size:12.0px;line-height:12.0px;color:#5c5c5c;letter-spacing:0">?</div>
<div class="t" style="left:600.50px;top:739.00px;font-size:12.0px;line-height:12.0px;color:#5c5c5c;letter-spacing:0">?</div>
<div class="t" style="left:609.46px;top:739.00px;font-size:12.0px;line-height:12.0px;color:#5c5c5c;letter-spacing:0">?</div>
<div class="t" style="left:627.39px;top:739.00px;font-size:12.0px;line-height:12.0px;color:#5c5c5c;letter-spacing:0">?</div>
<div class="t" style="left:636.35px;top:739.00px;font-size:12.0px;line-height:12.0px;color:#5c5c5c;letter-spacing:0">?</div>
<div class="t" style="left:654.27px;top:739.00px;font-size:12.0px;line-height:12.0px;color:#5c5c5c;letter-spacing:0">?</div>
<div class="t" style="left:663.24px;top:739.00px;font-size:12.0px;line-height:12.0px;color:#5c5c5c;letter-spacing:0">?</div>
<div class="t" style="left:672.20px;top:739.00px;font-size:12.0px;line-height:12.0px;color:#5c5c5c;letter-spacing:0">?</div>
<div class="t" style="left:446.81px;top:737.00px;font-size:15.6px;line-height:15.6px;font-family:'Liberation Mono',monospace;color:#d4d4d4;letter-spacing:0;letter-spacing:-0.12px">,</div>
<div class="t" style="left:464.73px;top:737.00px;font-size:15.6px;line-height:15.6px;font-family:'Liberation Mono',monospace;color:#d4d4d4;letter-spacing:0;letter-spacing:-0.12px">1</div>
<div class="t" style="left:473.69px;top:737.00px;font-size:15.6px;line-height:15.6px;font-family:'Liberation Mono',monospace;color:#d4d4d4;letter-spacing:0;letter-spacing:-0.12px">s</div>
<div class="t" style="left:545.40px;top:737.00px;font-size:15.6px;line-height:15.6px;font-family:'Liberation Mono',monospace;color:#d4d4d4;letter-spacing:0;letter-spacing:-0.12px">1</div>
<div class="t" style="left:581.25px;top:737.00px;font-size:15.6px;line-height:15.6px;font-family:'Liberation Mono',monospace;color:#d4d4d4;letter-spacing:0;letter-spacing:-0.12px">2</div>
<div class="t" style="left:617.10px;top:737.00px;font-size:15.6px;line-height:15.6px;font-family:'Liberation Mono',monospace;color:#d4d4d4;letter-spacing:0;letter-spacing:-0.12px">s</div>
<div class="t" style="left:643.99px;top:737.00px;font-size:15.6px;line-height:15.6px;font-family:'Liberation Mono',monospace;color:#d4d4d4;letter-spacing:0;letter-spacing:-0.12px">1</div>
<div class="a" style="left:428.20px;top:757.40px;width:10.6px;height:10.6px;background:#d8d8d8;transform:rotate(45deg)"></div>
<div class="a" style="left:446.71px;top:757.40px;width:10.6px;height:10.6px;background:#d8d8d8;transform:rotate(45deg)"></div>
<div class="a" style="left:465.23px;top:757.40px;width:10.6px;height:10.6px;background:#d8d8d8;transform:rotate(45deg)"></div>
<div class="a" style="left:483.74px;top:757.40px;width:10.6px;height:10.6px;background:#d8d8d8;transform:rotate(45deg)"></div>
<div class="a" style="left:493.00px;top:757.40px;width:10.6px;height:10.6px;background:#d8d8d8;transform:rotate(45deg)"></div>
<div class="a" style="left:502.26px;top:757.40px;width:10.6px;height:10.6px;background:#d8d8d8;transform:rotate(45deg)"></div>
<div class="a" style="left:511.51px;top:757.40px;width:10.6px;height:10.6px;background:#d8d8d8;transform:rotate(45deg)"></div>
<div class="a" style="left:520.77px;top:757.40px;width:10.6px;height:10.6px;background:#d8d8d8;transform:rotate(45deg)"></div>
<div class="a" style="left:530.03px;top:757.40px;width:10.6px;height:10.6px;background:#d8d8d8;transform:rotate(45deg)"></div>
<div class="a" style="left:539.29px;top:757.40px;width:10.6px;height:10.6px;background:#d8d8d8;transform:rotate(45deg)"></div>
<div class="a" style="left:548.54px;top:757.40px;width:10.6px;height:10.6px;background:#d8d8d8;transform:rotate(45deg)"></div>
<div class="a" style="left:594.83px;top:757.40px;width:10.6px;height:10.6px;background:#d8d8d8;transform:rotate(45deg)"></div>
<div class="a" style="left:604.09px;top:757.40px;width:10.6px;height:10.6px;background:#d8d8d8;transform:rotate(45deg)"></div>
<div class="a" style="left:613.34px;top:757.40px;width:10.6px;height:10.6px;background:#d8d8d8;transform:rotate(45deg)"></div>
<div class="a" style="left:622.60px;top:757.40px;width:10.6px;height:10.6px;background:#d8d8d8;transform:rotate(45deg)"></div>
<div class="a" style="left:641.11px;top:757.40px;width:10.6px;height:10.6px;background:#d8d8d8;transform:rotate(45deg)"></div>
<div class="a" style="left:650.37px;top:757.40px;width:10.6px;height:10.6px;background:#d8d8d8;transform:rotate(45deg)"></div>
<div class="a" style="left:668.89px;top:757.40px;width:10.6px;height:10.6px;background:#d8d8d8;transform:rotate(45deg)"></div>
<div class="a" style="left:678.14px;top:757.40px;width:10.6px;height:10.6px;background:#d8d8d8;transform:rotate(45deg)"></div>
<div class="a" style="left:687.40px;top:757.40px;width:10.6px;height:10.6px;background:#d8d8d8;transform:rotate(45deg)"></div>
<div class="a" style="left:696.66px;top:757.40px;width:10.6px;height:10.6px;background:#d8d8d8;transform:rotate(45deg)"></div>
<div class="a" style="left:705.91px;top:757.40px;width:10.6px;height:10.6px;background:#d8d8d8;transform:rotate(45deg)"></div>
<div class="a" style="left:715.17px;top:757.40px;width:10.6px;height:10.6px;background:#d8d8d8;transform:rotate(45deg)"></div>
<div class="a" style="left:724.43px;top:757.40px;width:10.6px;height:10.6px;background:#d8d8d8;transform:rotate(45deg)"></div>
<div class="a" style="left:742.94px;top:757.40px;width:10.6px;height:10.6px;background:#d8d8d8;transform:rotate(45deg)"></div>
<div class="a" style="left:752.20px;top:757.40px;width:10.6px;height:10.6px;background:#d8d8d8;transform:rotate(45deg)"></div>
<div class="a" style="left:761.46px;top:757.40px;width:10.6px;height:10.6px;background:#d8d8d8;transform:rotate(45deg)"></div>
<div class="a" style="left:770.71px;top:757.40px;width:10.6px;height:10.6px;background:#d8d8d8;transform:rotate(45deg)"></div>
<div class="a" style="left:779.97px;top:757.40px;width:10.6px;height:10.6px;background:#d8d8d8;transform:rotate(45deg)"></div>
<div class="a" style="left:789.23px;top:757.40px;width:10.6px;height:10.6px;background:#d8d8d8;transform:rotate(45deg)"></div>
<div class="a" style="left:891.06px;top:757.40px;width:10.6px;height:10.6px;background:#d8d8d8;transform:rotate(45deg)"></div>
<div class="a" style="left:918.83px;top:757.40px;width:10.6px;height:10.6px;background:#d8d8d8;transform:rotate(45deg)"></div>
<div class="a" style="left:928.09px;top:757.40px;width:10.6px;height:10.6px;background:#d8d8d8;transform:rotate(45deg)"></div>
<div class="a" style="left:937.34px;top:757.40px;width:10.6px;height:10.6px;background:#d8d8d8;transform:rotate(45deg)"></div>
<div class="a" style="left:955.86px;top:757.40px;width:10.6px;height:10.6px;background:#d8d8d8;transform:rotate(45deg)"></div>
<div class="a" style="left:965.11px;top:757.40px;width:10.6px;height:10.6px;background:#d8d8d8;transform:rotate(45deg)"></div>
<div class="a" style="left:974.37px;top:757.40px;width:10.6px;height:10.6px;background:#d8d8d8;transform:rotate(45deg)"></div>
<div class="a" style="left:983.63px;top:757.40px;width:10.6px;height:10.6px;background:#d8d8d8;transform:rotate(45deg)"></div>
<div class="a" style="left:992.89px;top:757.40px;width:10.6px;height:10.6px;background:#d8d8d8;transform:rotate(45deg)"></div>
<div class="a" style="left:1011.40px;top:757.40px;width:10.6px;height:10.6px;background:#d8d8d8;transform:rotate(45deg)"></div>
<div class="a" style="left:1039.17px;top:757.40px;width:10.6px;height:10.6px;background:#d8d8d8;transform:rotate(45deg)"></div>
<div class="a" style="left:1048.43px;top:757.40px;width:10.6px;height:10.6px;background:#d8d8d8;transform:rotate(45deg)"></div>
<div class="a" style="left:1066.94px;top:757.40px;width:10.6px;height:10.6px;background:#d8d8d8;transform:rotate(45deg)"></div>
<div class="a" style="left:1076.20px;top:757.40px;width:10.6px;height:10.6px;background:#d8d8d8;transform:rotate(45deg)"></div>
<div class="t" style="left:430.20px;top:759.00px;font-size:12.0px;line-height:12.0px;color:#5c5c5c;letter-spacing:0">?</div>
<div class="t" style="left:448.71px;top:759.00px;font-size:12.0px;line-height:12.0px;color:#5c5c5c;letter-spacing:0">?</div>
<div class="t" style="left:467.23px;top:759.00px;font-size:12.0px;line-height:12.0px;color:#5c5c5c;letter-spacing:0">?</div>
<div class="t" style="left:485.74px;top:759.00px;font-size:12.0px;line-height:12.0px;color:#5c5c5c;letter-spacing:0">?</div>
<div class="t" style="left:495.00px;top:759.00px;font-size:12.0px;line-height:12.0px;color:#5c5c5c;letter-spacing:0">?</div>
<div class="t" style="left:504.26px;top:759.00px;font-size:12.0px;line-height:12.0px;color:#5c5c5c;letter-spacing:0">?</div>
<div class="t" style="left:513.51px;top:759.00px;font-size:12.0px;line-height:12.0px;color:#5c5c5c;letter-spacing:0">?</div>
<div class="t" style="left:522.77px;top:759.00px;font-size:12.0px;line-height:12.0px;color:#5c5c5c;letter-spacing:0">?</div>
<div class="t" style="left:532.03px;top:759.00px;font-size:12.0px;line-height:12.0px;color:#5c5c5c;letter-spacing:0">?</div>
<div class="t" style="left:541.29px;top:759.00px;font-size:12.0px;line-height:12.0px;color:#5c5c5c;letter-spacing:0">?</div>
<div class="t" style="left:550.54px;top:759.00px;font-size:12.0px;line-height:12.0px;color:#5c5c5c;letter-spacing:0">?</div>
<div class="t" style="left:596.83px;top:759.00px;font-size:12.0px;line-height:12.0px;color:#5c5c5c;letter-spacing:0">?</div>
<div class="t" style="left:606.09px;top:759.00px;font-size:12.0px;line-height:12.0px;color:#5c5c5c;letter-spacing:0">?</div>
<div class="t" style="left:615.34px;top:759.00px;font-size:12.0px;line-height:12.0px;color:#5c5c5c;letter-spacing:0">?</div>
<div class="t" style="left:624.60px;top:759.00px;font-size:12.0px;line-height:12.0px;color:#5c5c5c;letter-spacing:0">?</div>
<div class="t" style="left:643.11px;top:759.00px;font-size:12.0px;line-height:12.0px;color:#5c5c5c;letter-spacing:0">?</div>
<div class="t" style="left:652.37px;top:759.00px;font-size:12.0px;line-height:12.0px;color:#5c5c5c;letter-spacing:0">?</div>
<div class="t" style="left:670.89px;top:759.00px;font-size:12.0px;line-height:12.0px;color:#5c5c5c;letter-spacing:0">?</div>
<div class="t" style="left:680.14px;top:759.00px;font-size:12.0px;line-height:12.0px;color:#5c5c5c;letter-spacing:0">?</div>
<div class="t" style="left:689.40px;top:759.00px;font-size:12.0px;line-height:12.0px;color:#5c5c5c;letter-spacing:0">?</div>
<div class="t" style="left:698.66px;top:759.00px;font-size:12.0px;line-height:12.0px;color:#5c5c5c;letter-spacing:0">?</div>
<div class="t" style="left:707.91px;top:759.00px;font-size:12.0px;line-height:12.0px;color:#5c5c5c;letter-spacing:0">?</div>
<div class="t" style="left:717.17px;top:759.00px;font-size:12.0px;line-height:12.0px;color:#5c5c5c;letter-spacing:0">?</div>
<div class="t" style="left:726.43px;top:759.00px;font-size:12.0px;line-height:12.0px;color:#5c5c5c;letter-spacing:0">?</div>
<div class="t" style="left:744.94px;top:759.00px;font-size:12.0px;line-height:12.0px;color:#5c5c5c;letter-spacing:0">?</div>
<div class="t" style="left:754.20px;top:759.00px;font-size:12.0px;line-height:12.0px;color:#5c5c5c;letter-spacing:0">?</div>
<div class="t" style="left:763.46px;top:759.00px;font-size:12.0px;line-height:12.0px;color:#5c5c5c;letter-spacing:0">?</div>
<div class="t" style="left:772.71px;top:759.00px;font-size:12.0px;line-height:12.0px;color:#5c5c5c;letter-spacing:0">?</div>
<div class="t" style="left:781.97px;top:759.00px;font-size:12.0px;line-height:12.0px;color:#5c5c5c;letter-spacing:0">?</div>
<div class="t" style="left:791.23px;top:759.00px;font-size:12.0px;line-height:12.0px;color:#5c5c5c;letter-spacing:0">?</div>
<div class="t" style="left:893.06px;top:759.00px;font-size:12.0px;line-height:12.0px;color:#5c5c5c;letter-spacing:0">?</div>
<div class="t" style="left:920.83px;top:759.00px;font-size:12.0px;line-height:12.0px;color:#5c5c5c;letter-spacing:0">?</div>
<div class="t" style="left:930.09px;top:759.00px;font-size:12.0px;line-height:12.0px;color:#5c5c5c;letter-spacing:0">?</div>
<div class="t" style="left:939.34px;top:759.00px;font-size:12.0px;line-height:12.0px;color:#5c5c5c;letter-spacing:0">?</div>
<div class="t" style="left:957.86px;top:759.00px;font-size:12.0px;line-height:12.0px;color:#5c5c5c;letter-spacing:0">?</div>
<div class="t" style="left:967.11px;top:759.00px;font-size:12.0px;line-height:12.0px;color:#5c5c5c;letter-spacing:0">?</div>
<div class="t" style="left:976.37px;top:759.00px;font-size:12.0px;line-height:12.0px;color:#5c5c5c;letter-spacing:0">?</div>
<div class="t" style="left:985.63px;top:759.00px;font-size:12.0px;line-height:12.0px;color:#5c5c5c;letter-spacing:0">?</div>
<div class="t" style="left:994.89px;top:759.00px;font-size:12.0px;line-height:12.0px;color:#5c5c5c;letter-spacing:0">?</div>
<div class="t" style="left:1013.40px;top:759.00px;font-size:12.0px;line-height:12.0px;color:#5c5c5c;letter-spacing:0">?</div>
<div class="t" style="left:1041.17px;top:759.00px;font-size:12.0px;line-height:12.0px;color:#5c5c5c;letter-spacing:0">?</div>
<div class="t" style="left:1050.43px;top:759.00px;font-size:12.0px;line-height:12.0px;color:#5c5c5c;letter-spacing:0">?</div>
<div class="t" style="left:1068.94px;top:759.00px;font-size:12.0px;line-height:12.0px;color:#5c5c5c;letter-spacing:0">?</div>
<div class="t" style="left:1078.20px;top:759.00px;font-size:12.0px;line-height:12.0px;color:#5c5c5c;letter-spacing:0">?</div>
<div class="t" style="left:438.14px;top:757.00px;font-size:15.6px;line-height:15.6px;font-family:'Liberation Mono',monospace;color:#d4d4d4;letter-spacing:0;letter-spacing:-0.12px">,</div>
<div class="t" style="left:456.65px;top:757.00px;font-size:15.6px;line-height:15.6px;font-family:'Liberation Mono',monospace;color:#d4d4d4;letter-spacing:0;letter-spacing:-0.12px">&#x27;</div>
<div class="t" style="left:475.17px;top:757.00px;font-size:15.6px;line-height:15.6px;font-family:'Liberation Mono',monospace;color:#d4d4d4;letter-spacing:0;letter-spacing:-0.12px">a</div>
<div class="t" style="left:558.48px;top:757.00px;font-size:15.6px;line-height:15.6px;font-family:'Liberation Mono',monospace;color:#d4d4d4;letter-spacing:0;letter-spacing:-0.12px">N</div>
<div class="t" style="left:567.74px;top:757.00px;font-size:15.6px;line-height:15.6px;font-family:'Liberation Mono',monospace;color:#d4d4d4;letter-spacing:0;letter-spacing:-0.12px">A</div>
<div class="t" style="left:576.99px;top:757.00px;font-size:15.6px;line-height:15.6px;font-family:'Liberation Mono',monospace;color:#d4d4d4;letter-spacing:0;letter-spacing:-0.12px">N</div>
<div class="t" style="left:586.25px;top:757.00px;font-size:15.6px;line-height:15.6px;font-family:'Liberation Mono',monospace;color:#d4d4d4;letter-spacing:0;letter-spacing:-0.12px">D</div>
<div class="t" style="left:632.54px;top:757.00px;font-size:15.6px;line-height:15.6px;font-family:'Liberation Mono',monospace;color:#d4d4d4;letter-spacing:0;letter-spacing:-0.12px">_</div>
<div class="t" style="left:660.31px;top:757.00px;font-size:15.6px;line-height:15.6px;font-family:'Liberation Mono',monospace;color:#d4d4d4;letter-spacing:0;letter-spacing:-0.12px">6</div>
<div class="t" style="left:734.37px;top:757.00px;font-size:15.6px;line-height:15.6px;font-family:'Liberation Mono',monospace;color:#d4d4d4;letter-spacing:0;letter-spacing:-0.12px">1</div>
<div class="t" style="left:799.17px;top:757.00px;font-size:15.6px;line-height:15.6px;font-family:'Liberation Mono',monospace;color:#d4d4d4;letter-spacing:0;letter-spacing:-0.12px">N</div>
<div class="t" style="left:808.42px;top:757.00px;font-size:15.6px;line-height:15.6px;font-family:'Liberation Mono',monospace;color:#d4d4d4;letter-spacing:0;letter-spacing:-0.12px">A</div>
<div class="t" style="left:817.68px;top:757.00px;font-size:15.6px;line-height:15.6px;font-family:'Liberation Mono',monospace;color:#d4d4d4;letter-spacing:0;letter-spacing:-0.12px">N</div>
<div class="t" style="left:826.94px;top:757.00px;font-size:15.6px;line-height:15.6px;font-family:'Liberation Mono',monospace;color:#d4d4d4;letter-spacing:0;letter-spacing:-0.12px">D</div>
<div class="t" style="left:845.45px;top:757.00px;font-size:15.6px;line-height:15.6px;font-family:'Liberation Mono',monospace;color:#d4d4d4;letter-spacing:0;letter-spacing:-0.12px">F</div>
<div class="t" style="left:854.71px;top:757.00px;font-size:15.6px;line-height:15.6px;font-family:'Liberation Mono',monospace;color:#d4d4d4;letter-spacing:0;letter-spacing:-0.12px">l</div>
<div class="t" style="left:863.97px;top:757.00px;font-size:15.6px;line-height:15.6px;font-family:'Liberation Mono',monospace;color:#d4d4d4;letter-spacing:0;letter-spacing:-0.12px">a</div>
<div class="t" style="left:873.22px;top:757.00px;font-size:15.6px;line-height:15.6px;font-family:'Liberation Mono',monospace;color:#d4d4d4;letter-spacing:0;letter-spacing:-0.12px">s</div>
<div class="t" style="left:882.48px;top:757.00px;font-size:15.6px;line-height:15.6px;font-family:'Liberation Mono',monospace;color:#d4d4d4;letter-spacing:0;letter-spacing:-0.12px">h</div>
<div class="t" style="left:900.99px;top:757.00px;font-size:15.6px;line-height:15.6px;font-family:'Liberation Mono',monospace;color:#d4d4d4;letter-spacing:0;letter-spacing:-0.12px">j</div>
<div class="t" style="left:910.25px;top:757.00px;font-size:15.6px;line-height:15.6px;font-family:'Liberation Mono',monospace;color:#d4d4d4;letter-spacing:0;letter-spacing:-0.12px">c</div>
<div class="t" style="left:947.28px;top:757.00px;font-size:15.6px;line-height:15.6px;font-family:'Liberation Mono',monospace;color:#d4d4d4;letter-spacing:0;letter-spacing:-0.12px">&#x27;</div>
<div class="t" style="left:1002.82px;top:757.00px;font-size:15.6px;line-height:15.6px;font-family:'Liberation Mono',monospace;color:#d4d4d4;letter-spacing:0;letter-spacing:-0.12px">l</div>
<div class="t" style="left:1021.34px;top:757.00px;font-size:15.6px;line-height:15.6px;font-family:'Liberation Mono',monospace;color:#d4d4d4;letter-spacing:0;letter-spacing:-0.12px">z</div>
<div class="t" style="left:1030.59px;top:757.00px;font-size:15.6px;line-height:15.6px;font-family:'Liberation Mono',monospace;color:#d4d4d4;letter-spacing:0;letter-spacing:-0.12px">T</div>
<div class="t" style="left:1058.37px;top:757.00px;font-size:15.6px;line-height:15.6px;font-family:'Liberation Mono',monospace;color:#d4d4d4;letter-spacing:0;letter-spacing:-0.12px">&#x27;</div>
<div class="t" style="left:426.00px;top:777.00px;font-size:15.6px;line-height:15.6px;font-family:'Liberation Mono',monospace;color:#d4d4d4;letter-spacing:0;letter-spacing:-0.12px">1 - </div>
<div class="a" style="left:465.70px;top:777.40px;width:10.6px;height:10.6px;background:#d8d8d8;transform:rotate(45deg)"></div>
<div class="a" style="left:473.60px;top:777.40px;width:10.6px;height:10.6px;background:#d8d8d8;transform:rotate(45deg)"></div>
<div class="a" style="left:489.42px;top:777.40px;width:10.6px;height:10.6px;background:#d8d8d8;transform:rotate(45deg)"></div>
<div class="a" style="left:497.32px;top:777.40px;width:10.6px;height:10.6px;background:#d8d8d8;transform:rotate(45deg)"></div>
<div class="a" style="left:505.22px;top:777.40px;width:10.6px;height:10.6px;background:#d8d8d8;transform:rotate(45deg)"></div>
<div class="a" style="left:513.13px;top:777.40px;width:10.6px;height:10.6px;background:#d8d8d8;transform:rotate(45deg)"></div>
<div class="a" style="left:521.04px;top:777.40px;width:10.6px;height:10.6px;background:#d8d8d8;transform:rotate(45deg)"></div>
<div class="a" style="left:528.94px;top:777.40px;width:10.6px;height:10.6px;background:#d8d8d8;transform:rotate(45deg)"></div>
<div class="a" style="left:536.85px;top:777.40px;width:10.6px;height:10.6px;background:#d8d8d8;transform:rotate(45deg)"></div>
<div class="a" style="left:544.75px;top:777.40px;width:10.6px;height:10.6px;background:#d8d8d8;transform:rotate(45deg)"></div>
<div class="a" style="left:552.66px;top:777.40px;width:10.6px;height:10.6px;background:#d8d8d8;transform:rotate(45deg)"></div>
<div class="a" style="left:560.56px;top:777.40px;width:10.6px;height:10.6px;background:#d8d8d8;transform:rotate(45deg)"></div>
<div class="a" style="left:576.37px;top:777.40px;width:10.6px;height:10.6px;background:#d8d8d8;transform:rotate(45deg)"></div>
<div class="a" style="left:584.28px;top:777.40px;width:10.6px;height:10.6px;background:#d8d8d8;transform:rotate(45deg)"></div>
<div class="a" style="left:592.18px;top:777.40px;width:10.6px;height:10.6px;background:#d8d8d8;transform:rotate(45deg)"></div>
<div class="a" style="left:600.09px;top:777.40px;width:10.6px;height:10.6px;background:#d8d8d8;transform:rotate(45deg)"></div>
<div class="a" style="left:607.99px;top:777.40px;width:10.6px;height:10.6px;background:#d8d8d8;transform:rotate(45deg)"></div>
<div class="a" style="left:615.90px;top:777.40px;width:10.6px;height:10.6px;background:#d8d8d8;transform:rotate(45deg)"></div>
<div class="a" style="left:623.80px;top:777.40px;width:10.6px;height:10.6px;background:#d8d8d8;transform:rotate(45deg)"></div>
<div class="t" style="left:467.70px;top:779.00px;font-size:12.0px;line-height:12.0px;color:#5c5c5c;letter-spacing:0">?</div>
<div class="t" style="left:475.60px;top:779.00px;font-size:12.0px;line-height:12.0px;color:#5c5c5c;letter-spacing:0">?</div>
<div class="t" style="left:491.42px;top:779.00px;font-size:12.0px;line-height:12.0px;color:#5c5c5c;letter-spacing:0">?</div>
<div class="t" style="left:499.32px;top:779.00px;font-size:12.0px;line-height:12.0px;color:#5c5c5c;letter-spacing:0">?</div>
<div class="t" style="left:507.22px;top:779.00px;font-size:12.0px;line-height:12.0px;color:#5c5c5c;letter-spacing:0">?</div>
<div class="t" style="left:515.13px;top:779.00px;font-size:12.0px;line-height:12.0px;color:#5c5c5c;letter-spacing:0">?</div>
<div class="t" style="left:523.04px;top:779.00px;font-size:12.0px;line-height:12.0px;color:#5c5c5c;letter-spacing:0">?</div>
<div class="t" style="left:530.94px;top:779.00px;font-size:12.0px;line-height:12.0px;color:#5c5c5c;letter-spacing:0">?</div>
<div class="t" style="left:538.85px;top:779.00px;font-size:12.0px;line-height:12.0px;color:#5c5c5c;letter-spacing:0">?</div>
<div class="t" style="left:546.75px;top:779.00px;font-size:12.0px;line-height:12.0px;color:#5c5c5c;letter-spacing:0">?</div>
<div class="t" style="left:554.66px;top:779.00px;font-size:12.0px;line-height:12.0px;color:#5c5c5c;letter-spacing:0">?</div>
<div class="t" style="left:562.56px;top:779.00px;font-size:12.0px;line-height:12.0px;color:#5c5c5c;letter-spacing:0">?</div>
<div class="t" style="left:578.37px;top:779.00px;font-size:12.0px;line-height:12.0px;color:#5c5c5c;letter-spacing:0">?</div>
<div class="t" style="left:586.28px;top:779.00px;font-size:12.0px;line-height:12.0px;color:#5c5c5c;letter-spacing:0">?</div>
<div class="t" style="left:594.18px;top:779.00px;font-size:12.0px;line-height:12.0px;color:#5c5c5c;letter-spacing:0">?</div>
<div class="t" style="left:602.09px;top:779.00px;font-size:12.0px;line-height:12.0px;color:#5c5c5c;letter-spacing:0">?</div>
<div class="t" style="left:609.99px;top:779.00px;font-size:12.0px;line-height:12.0px;color:#5c5c5c;letter-spacing:0">?</div>
<div class="t" style="left:617.90px;top:779.00px;font-size:12.0px;line-height:12.0px;color:#5c5c5c;letter-spacing:0">?</div>
<div class="t" style="left:625.80px;top:779.00px;font-size:12.0px;line-height:12.0px;color:#5c5c5c;letter-spacing:0">?</div>
<div class="t" style="left:482.19px;top:777.00px;font-size:15.6px;line-height:15.6px;font-family:'Liberation Mono',monospace;color:#d4d4d4;letter-spacing:0;letter-spacing:-0.12px">&#x27;</div>
<div class="t" style="left:569.14px;top:777.00px;font-size:15.6px;line-height:15.6px;font-family:'Liberation Mono',monospace;color:#d4d4d4;letter-spacing:0;letter-spacing:-0.12px">l</div>
<div class="t" style="left:426.00px;top:797.00px;font-size:15.6px;line-height:15.6px;font-family:'Liberation Mono',monospace;color:#d4d4d4;letter-spacing:0;letter-spacing:-0.12px">2 - </div>
<div class="a" style="left:465.70px;top:797.40px;width:10.6px;height:10.6px;background:#d8d8d8;transform:rotate(45deg)"></div>
<div class="a" style="left:474.88px;top:797.40px;width:10.6px;height:10.6px;background:#d8d8d8;transform:rotate(45deg)"></div>
<div class="a" style="left:493.24px;top:797.40px;width:10.6px;height:10.6px;background:#d8d8d8;transform:rotate(45deg)"></div>
<div class="a" style="left:502.41px;top:797.40px;width:10.6px;height:10.6px;background:#d8d8d8;transform:rotate(45deg)"></div>
<div class="a" style="left:511.59px;top:797.40px;width:10.6px;height:10.6px;background:#d8d8d8;transform:rotate(45deg)"></div>
<div class="a" style="left:520.77px;top:797.40px;width:10.6px;height:10.6px;background:#d8d8d8;transform:rotate(45deg)"></div>
<div class="a" style="left:548.31px;top:797.40px;width:10.6px;height:10.6px;background:#d8d8d8;transform:rotate(45deg)"></div>
<div class="a" style="left:566.66px;top:797.40px;width:10.6px;height:10.6px;background:#d8d8d8;transform:rotate(45deg)"></div>
<div class="a" style="left:575.84px;top:797.40px;width:10.6px;height:10.6px;background:#d8d8d8;transform:rotate(45deg)"></div>
<div class="a" style="left:594.20px;top:797.40px;width:10.6px;height:10.6px;background:#d8d8d8;transform:rotate(45deg)"></div>
<div class="t" style="left:467.70px;top:799.00px;font-size:12.0px;line-height:12.0px;color:#5c5c5c;letter-spacing:0">?</div>
<div class="t" style="left:476.88px;top:799.00px;font-size:12.0px;line-height:12.0px;color:#5c5c5c;letter-spacing:0">?</div>
<div class="t" style="left:495.24px;top:799.00px;font-size:12.0px;line-height:12.0px;color:#5c5c5c;letter-spacing:0">?</div>
<div class="t" style="left:504.41px;top:799.00px;font-size:12.0px;line-height:12.0px;color:#5c5c5c;letter-spacing:0">?</div>
<div class="t" style="left:513.59px;top:799.00px;font-size:12.0px;line-height:12.0px;color:#5c5c5c;letter-spacing:0">?</div>
<div class="t" style="left:522.77px;top:799.00px;font-size:12.0px;line-height:12.0px;color:#5c5c5c;letter-spacing:0">?</div>
<div class="t" style="left:550.31px;top:799.00px;font-size:12.0px;line-height:12.0px;color:#5c5c5c;letter-spacing:0">?</div>
<div class="t" style="left:568.66px;top:799.00px;font-size:12.0px;line-height:12.0px;color:#5c5c5c;letter-spacing:0">?</div>
<div class="t" style="left:577.84px;top:799.00px;font-size:12.0px;line-height:12.0px;color:#5c5c5c;letter-spacing:0">?</div>
<div class="t" style="left:596.20px;top:799.00px;font-size:12.0px;line-height:12.0px;color:#5c5c5c;letter-spacing:0">?</div>
<div class="t" style="left:484.74px;top:797.00px;font-size:15.6px;line-height:15.6px;font-family:'Liberation Mono',monospace;color:#d4d4d4;letter-spacing:0;letter-spacing:-0.12px">&#x27;</div>
<div class="t" style="left:530.63px;top:797.00px;font-size:15.6px;line-height:15.6px;font-family:'Liberation Mono',monospace;color:#d4d4d4;letter-spacing:0;letter-spacing:-0.12px">-</div>
<div class="t" style="left:539.81px;top:797.00px;font-size:15.6px;line-height:15.6px;font-family:'Liberation Mono',monospace;color:#d4d4d4;letter-spacing:0;letter-spacing:-0.12px">%</div>
<div class="t" style="left:558.17px;top:797.00px;font-size:15.6px;line-height:15.6px;font-family:'Liberation Mono',monospace;color:#d4d4d4;letter-spacing:0;letter-spacing:-0.12px">d</div>
<div class="t" style="left:585.70px;top:797.00px;font-size:15.6px;line-height:15.6px;font-family:'Liberation Mono',monospace;color:#d4d4d4;letter-spacing:0;letter-spacing:-0.12px">l</div>
<div class="t" style="left:426.00px;top:817.00px;font-size:15.6px;line-height:15.6px;font-family:'Liberation Mono',monospace;color:#d4d4d4;letter-spacing:0;letter-spacing:-0.12px">3 - </div>
<div class="a" style="left:465.70px;top:817.40px;width:10.6px;height:10.6px;background:#d8d8d8;transform:rotate(45deg)"></div>
<div class="a" style="left:474.94px;top:817.40px;width:10.6px;height:10.6px;background:#d8d8d8;transform:rotate(45deg)"></div>
<div class="a" style="left:484.18px;top:817.40px;width:10.6px;height:10.6px;background:#d8d8d8;transform:rotate(45deg)"></div>
<div class="a" style="left:493.43px;top:817.40px;width:10.6px;height:10.6px;background:#d8d8d8;transform:rotate(45deg)"></div>
<div class="a" style="left:502.67px;top:817.40px;width:10.6px;height:10.6px;background:#d8d8d8;transform:rotate(45deg)"></div>
<div class="a" style="left:511.91px;top:817.40px;width:10.6px;height:10.6px;background:#d8d8d8;transform:rotate(45deg)"></div>
<div class="a" style="left:521.15px;top:817.40px;width:10.6px;height:10.6px;background:#d8d8d8;transform:rotate(45deg)"></div>
<div class="a" style="left:530.39px;top:817.40px;width:10.6px;height:10.6px;background:#d8d8d8;transform:rotate(45deg)"></div>
<div class="a" style="left:576.60px;top:817.40px;width:10.6px;height:10.6px;background:#d8d8d8;transform:rotate(45deg)"></div>
<div class="a" style="left:595.09px;top:817.40px;width:10.6px;height:10.6px;background:#d8d8d8;transform:rotate(45deg)"></div>
<div class="a" style="left:604.33px;top:817.40px;width:10.6px;height:10.6px;background:#d8d8d8;transform:rotate(45deg)"></div>
<div class="a" style="left:613.57px;top:817.40px;width:10.6px;height:10.6px;background:#d8d8d8;transform:rotate(45deg)"></div>
<div class="a" style="left:632.05px;top:817.40px;width:10.6px;height:10.6px;background:#d8d8d8;transform:rotate(45deg)"></div>
<div class="a" style="left:650.54px;top:817.40px;width:10.6px;height:10.6px;background:#d8d8d8;transform:rotate(45deg)"></div>
<div class="a" style="left:659.78px;top:817.40px;width:10.6px;height:10.6px;background:#d8d8d8;transform:rotate(45deg)"></div>
<div class="a" style="left:669.02px;top:817.40px;width:10.6px;height:10.6px;background:#d8d8d8;transform:rotate(45deg)"></div>
<div class="a" style="left:678.26px;top:817.40px;width:10.6px;height:10.6px;background:#d8d8d8;transform:rotate(45deg)"></div>
<div class="a" style="left:687.51px;top:817.40px;width:10.6px;height:10.6px;background:#d8d8d8;transform:rotate(45deg)"></div>
<div class="a" style="left:705.99px;top:817.40px;width:10.6px;height:10.6px;background:#d8d8d8;transform:rotate(45deg)"></div>
<div class="a" style="left:715.23px;top:817.40px;width:10.6px;height:10.6px;background:#d8d8d8;transform:rotate(45deg)"></div>
<div class="a" style="left:724.47px;top:817.40px;width:10.6px;height:10.6px;background:#d8d8d8;transform:rotate(45deg)"></div>
<div class="a" style="left:733.72px;top:817.40px;width:10.6px;height:10.6px;background:#d8d8d8;transform:rotate(45deg)"></div>
<div class="a" style="left:742.96px;top:817.40px;width:10.6px;height:10.6px;background:#d8d8d8;transform:rotate(45deg)"></div>
<div class="a" style="left:752.20px;top:817.40px;width:10.6px;height:10.6px;background:#d8d8d8;transform:rotate(45deg)"></div>
<div class="t" style="left:467.70px;top:819.00px;font-size:12.0px;line-height:12.0px;color:#5c5c5c;letter-spacing:0">?</div>
<div class="t" style="left:476.94px;top:819.00px;font-size:12.0px;line-height:12.0px;color:#5c5c5c;letter-spacing:0">?</div>
<div class="t" style="left:486.18px;top:819.00px;font-size:12.0px;line-height:12.0px;color:#5c5c5c;letter-spacing:0">?</div>
<div class="t" style="left:495.43px;top:819.00px;font-size:12.0px;line-height:12.0px;color:#5c5c5c;letter-spacing:0">?</div>
<div class="t" style="left:504.67px;top:819.00px;font-size:12.0px;line-height:12.0px;color:#5c5c5c;letter-spacing:0">?</div>
<div class="t" style="left:513.91px;top:819.00px;font-size:12.0px;line-height:12.0px;color:#5c5c5c;letter-spacing:0">?</div>
<div class="t" style="left:523.15px;top:819.00px;font-size:12.0px;line-height:12.0px;color:#5c5c5c;letter-spacing:0">?</div>
<div class="t" style="left:532.39px;top:819.00px;font-size:12.0px;line-height:12.0px;color:#5c5c5c;letter-spacing:0">?</div>
<div class="t" style="left:578.60px;top:819.00px;font-size:12.0px;line-height:12.0px;color:#5c5c5c;letter-spacing:0">?</div>
<div class="t" style="left:597.09px;top:819.00px;font-size:12.0px;line-height:12.0px;color:#5c5c5c;letter-spacing:0">?</div>
<div class="t" style="left:606.33px;top:819.00px;font-size:12.0px;line-height:12.0px;color:#5c5c5c;letter-spacing:0">?</div>
<div class="t" style="left:615.57px;top:819.00px;font-size:12.0px;line-height:12.0px;color:#5c5c5c;letter-spacing:0">?</div>
<div class="t" style="left:634.05px;top:819.00px;font-size:12.0px;line-height:12.0px;color:#5c5c5c;letter-spacing:0">?</div>
<div class="t" style="left:652.54px;top:819.00px;font-size:12.0px;line-height:12.0px;color:#5c5c5c;letter-spacing:0">?</div>
<div class="t" style="left:661.78px;top:819.00px;font-size:12.0px;line-height:12.0px;color:#5c5c5c;letter-spacing:0">?</div>
<div class="t" style="left:671.02px;top:819.00px;font-size:12.0px;line-height:12.0px;color:#5c5c5c;letter-spacing:0">?</div>
<div class="t" style="left:680.26px;top:819.00px;font-size:12.0px;line-height:12.0px;color:#5c5c5c;letter-spacing:0">?</div>
<div class="t" style="left:689.51px;top:819.00px;font-size:12.0px;line-height:12.0px;color:#5c5c5c;letter-spacing:0">?</div>
<div class="t" style="left:707.99px;top:819.00px;font-size:12.0px;line-height:12.0px;color:#5c5c5c;letter-spacing:0">?</div>
<div class="t" style="left:717.23px;top:819.00px;font-size:12.0px;line-height:12.0px;color:#5c5c5c;letter-spacing:0">?</div>
<div class="t" style="left:726.47px;top:819.00px;font-size:12.0px;line-height:12.0px;color:#5c5c5c;letter-spacing:0">?</div>
<div class="t" style="left:735.72px;top:819.00px;font-size:12.0px;line-height:12.0px;color:#5c5c5c;letter-spacing:0">?</div>
<div class="t" style="left:744.96px;top:819.00px;font-size:12.0px;line-height:12.0px;color:#5c5c5c;letter-spacing:0">?</div>
<div class="t" style="left:754.20px;top:819.00px;font-size:12.0px;line-height:12.0px;color:#5c5c5c;letter-spacing:0">?</div>
<div class="t" style="left:540.32px;top:817.00px;font-size:15.6px;line-height:15.6px;font-family:'Liberation Mono',monospace;color:#d4d4d4;letter-spacing:0;letter-spacing:-0.12px">t</div>
<div class="t" style="left:549.56px;top:817.00px;font-size:15.6px;line-height:15.6px;font-family:'Liberation Mono',monospace;color:#d4d4d4;letter-spacing:0;letter-spacing:-0.12px">e</div>
<div class="t" style="left:558.80px;top:817.00px;font-size:15.6px;line-height:15.6px;font-family:'Liberation Mono',monospace;color:#d4d4d4;letter-spacing:0;letter-spacing:-0.12px">x</div>
<div class="t" style="left:568.04px;top:817.00px;font-size:15.6px;line-height:15.6px;font-family:'Liberation Mono',monospace;color:#d4d4d4;letter-spacing:0;letter-spacing:-0.12px">t</div>
<div class="t" style="left:586.53px;top:817.00px;font-size:15.6px;line-height:15.6px;font-family:'Liberation Mono',monospace;color:#d4d4d4;letter-spacing:0;letter-spacing:-0.12px">1</div>
<div class="t" style="left:623.49px;top:817.00px;font-size:15.6px;line-height:15.6px;font-family:'Liberation Mono',monospace;color:#d4d4d4;letter-spacing:0;letter-spacing:-0.12px">&#x27;</div>
<div class="t" style="left:641.98px;top:817.00px;font-size:15.6px;line-height:15.6px;font-family:'Liberation Mono',monospace;color:#d4d4d4;letter-spacing:0;letter-spacing:-0.12px">6</div>
<div class="t" style="left:697.43px;top:817.00px;font-size:15.6px;line-height:15.6px;font-family:'Liberation Mono',monospace;color:#d4d4d4;letter-spacing:0;letter-spacing:-0.12px">d</div>
<div class="t" style="left:426.00px;top:837.00px;font-size:15.6px;line-height:15.6px;font-family:'Liberation Mono',monospace;color:#d4d4d4;letter-spacing:0;letter-spacing:-0.12px">4 - </div>
<div class="a" style="left:473.37px;top:837.40px;width:10.6px;height:10.6px;background:#d8d8d8;transform:rotate(45deg)"></div>
<div class="a" style="left:481.05px;top:837.40px;width:10.6px;height:10.6px;background:#d8d8d8;transform:rotate(45deg)"></div>
<div class="a" style="left:488.72px;top:837.40px;width:10.6px;height:10.6px;background:#d8d8d8;transform:rotate(45deg)"></div>
<div class="a" style="left:496.40px;top:837.40px;width:10.6px;height:10.6px;background:#d8d8d8;transform:rotate(45deg)"></div>
<div class="a" style="left:504.07px;top:837.40px;width:10.6px;height:10.6px;background:#d8d8d8;transform:rotate(45deg)"></div>
<div class="a" style="left:511.74px;top:837.40px;width:10.6px;height:10.6px;background:#d8d8d8;transform:rotate(45deg)"></div>
<div class="a" style="left:519.42px;top:837.40px;width:10.6px;height:10.6px;background:#d8d8d8;transform:rotate(45deg)"></div>
<div class="a" style="left:527.09px;top:837.40px;width:10.6px;height:10.6px;background:#d8d8d8;transform:rotate(45deg)"></div>
<div class="a" style="left:534.77px;top:837.40px;width:10.6px;height:10.6px;background:#d8d8d8;transform:rotate(45deg)"></div>
<div class="a" style="left:542.44px;top:837.40px;width:10.6px;height:10.6px;background:#d8d8d8;transform:rotate(45deg)"></div>
<div class="a" style="left:550.11px;top:837.40px;width:10.6px;height:10.6px;background:#d8d8d8;transform:rotate(45deg)"></div>
<div class="a" style="left:557.79px;top:837.40px;width:10.6px;height:10.6px;background:#d8d8d8;transform:rotate(45deg)"></div>
<div class="a" style="left:565.46px;top:837.40px;width:10.6px;height:10.6px;background:#d8d8d8;transform:rotate(45deg)"></div>
<div class="a" style="left:573.13px;top:837.40px;width:10.6px;height:10.6px;background:#d8d8d8;transform:rotate(45deg)"></div>
<div class="a" style="left:580.81px;top:837.40px;width:10.6px;height:10.6px;background:#d8d8d8;transform:rotate(45deg)"></div>
<div class="a" style="left:588.48px;top:837.40px;width:10.6px;height:10.6px;background:#d8d8d8;transform:rotate(45deg)"></div>
<div class="a" style="left:596.16px;top:837.40px;width:10.6px;height:10.6px;background:#d8d8d8;transform:rotate(45deg)"></div>
<div class="a" style="left:611.50px;top:837.40px;width:10.6px;height:10.6px;background:#d8d8d8;transform:rotate(45deg)"></div>
<div class="a" style="left:619.18px;top:837.40px;width:10.6px;height:10.6px;background:#d8d8d8;transform:rotate(45deg)"></div>
<div class="a" style="left:626.85px;top:837.40px;width:10.6px;height:10.6px;background:#d8d8d8;transform:rotate(45deg)"></div>
<div class="a" style="left:634.53px;top:837.40px;width:10.6px;height:10.6px;background:#d8d8d8;transform:rotate(45deg)"></div>
<div class="a" style="left:642.20px;top:837.40px;width:10.6px;height:10.6px;background:#d8d8d8;transform:rotate(45deg)"></div>
<div class="t" style="left:475.37px;top:839.00px;font-size:12.0px;line-height:12.0px;color:#5c5c5c;letter-spacing:0">?</div>
<div class="t" style="left:483.05px;top:839.00px;font-size:12.0px;line-height:12.0px;color:#5c5c5c;letter-spacing:0">?</div>
<div class="t" style="left:490.72px;top:839.00px;font-size:12.0px;line-height:12.0px;color:#5c5c5c;letter-spacing:0">?</div>
<div class="t" style="left:498.40px;top:839.00px;font-size:12.0px;line-height:12.0px;color:#5c5c5c;letter-spacing:0">?</div>
<div class="t" style="left:506.07px;top:839.00px;font-size:12.0px;line-height:12.0px;color:#5c5c5c;letter-spacing:0">?</div>
<div class="t" style="left:513.74px;top:839.00px;font-size:12.0px;line-height:12.0px;color:#5c5c5c;letter-spacing:0">?</div>
<div class="t" style="left:521.42px;top:839.00px;font-size:12.0px;line-height:12.0px;color:#5c5c5c;letter-spacing:0">?</div>
<div class="t" style="left:529.09px;top:839.00px;font-size:12.0px;line-height:12.0px;color:#5c5c5c;letter-spacing:0">?</div>
<div class="t" style="left:536.77px;top:839.00px;font-size:12.0px;line-height:12.0px;color:#5c5c5c;letter-spacing:0">?</div>
<div class="t" style="left:544.44px;top:839.00px;font-size:12.0px;line-height:12.0px;color:#5c5c5c;letter-spacing:0">?</div>
<div class="t" style="left:552.11px;top:839.00px;font-size:12.0px;line-height:12.0px;color:#5c5c5c;letter-spacing:0">?</div>
<div class="t" style="left:559.79px;top:839.00px;font-size:12.0px;line-height:12.0px;color:#5c5c5c;letter-spacing:0">?</div>
<div class="t" style="left:567.46px;top:839.00px;font-size:12.0px;line-height:12.0px;color:#5c5c5c;letter-spacing:0">?</div>
<div class="t" style="left:575.13px;top:839.00px;font-size:12.0px;line-height:12.0px;color:#5c5c5c;letter-spacing:0">?</div>
<div class="t" style="left:582.81px;top:839.00px;font-size:12.0px;line-height:12.0px;color:#5c5c5c;letter-spacing:0">?</div>
<div class="t" style="left:590.48px;top:839.00px;font-size:12.0px;line-height:12.0px;color:#5c5c5c;letter-spacing:0">?</div>
<div class="t" style="left:598.16px;top:839.00px;font-size:12.0px;line-height:12.0px;color:#5c5c5c;letter-spacing:0">?</div>
<div class="t" style="left:613.50px;top:839.00px;font-size:12.0px;line-height:12.0px;color:#5c5c5c;letter-spacing:0">?</div>
<div class="t" style="left:621.18px;top:839.00px;font-size:12.0px;line-height:12.0px;color:#5c5c5c;letter-spacing:0">?</div>
<div class="t" style="left:628.85px;top:839.00px;font-size:12.0px;line-height:12.0px;color:#5c5c5c;letter-spacing:0">?</div>
<div class="t" style="left:636.53px;top:839.00px;font-size:12.0px;line-height:12.0px;color:#5c5c5c;letter-spacing:0">?</div>
<div class="t" style="left:644.20px;top:839.00px;font-size:12.0px;line-height:12.0px;color:#5c5c5c;letter-spacing:0">?</div>
<div class="t" style="left:466.38px;top:837.00px;font-size:15.6px;line-height:15.6px;font-family:'Liberation Mono',monospace;color:#d4d4d4;letter-spacing:0;letter-spacing:-0.12px">&#x27;</div>
<div class="t" style="left:604.51px;top:837.00px;font-size:15.6px;line-height:15.6px;font-family:'Liberation Mono',monospace;color:#d4d4d4;letter-spacing:0;letter-spacing:-0.12px">l</div>
<div class="t" style="left:426.00px;top:857.00px;font-size:15.6px;line-height:15.6px;font-family:'Liberation Mono',monospace;color:#d4d4d4;letter-spacing:0;letter-spacing:-0.12px">5 - </div>
<div class="a" style="left:465.70px;top:857.40px;width:10.6px;height:10.6px;background:#d8d8d8;transform:rotate(45deg)"></div>
<div class="a" style="left:475.50px;top:857.40px;width:10.6px;height:10.6px;background:#d8d8d8;transform:rotate(45deg)"></div>
<div class="a" style="left:485.31px;top:857.40px;width:10.6px;height:10.6px;background:#d8d8d8;transform:rotate(45deg)"></div>
<div class="a" style="left:495.11px;top:857.40px;width:10.6px;height:10.6px;background:#d8d8d8;transform:rotate(45deg)"></div>
<div class="a" style="left:514.72px;top:857.40px;width:10.6px;height:10.6px;background:#d8d8d8;transform:rotate(45deg)"></div>
<div class="a" style="left:524.52px;top:857.40px;width:10.6px;height:10.6px;background:#d8d8d8;transform:rotate(45deg)"></div>
<div class="a" style="left:573.53px;top:857.40px;width:10.6px;height:10.6px;background:#d8d8d8;transform:rotate(45deg)"></div>
<div class="a" style="left:593.14px;top:857.40px;width:10.6px;height:10.6px;background:#d8d8d8;transform:rotate(45deg)"></div>
<div class="a" style="left:602.94px;top:857.40px;width:10.6px;height:10.6px;background:#d8d8d8;transform:rotate(45deg)"></div>
<div class="a" style="left:612.75px;top:857.40px;width:10.6px;height:10.6px;background:#d8d8d8;transform:rotate(45deg)"></div>
<div class="a" style="left:632.35px;top:857.40px;width:10.6px;height:10.6px;background:#d8d8d8;transform:rotate(45deg)"></div>
<div class="a" style="left:642.15px;top:857.40px;width:10.6px;height:10.6px;background:#d8d8d8;transform:rotate(45deg)"></div>
<div class="a" style="left:661.76px;top:857.40px;width:10.6px;height:10.6px;background:#d8d8d8;transform:rotate(45deg)"></div>
<div class="a" style="left:681.37px;top:857.40px;width:10.6px;height:10.6px;background:#d8d8d8;transform:rotate(45deg)"></div>
<div class="a" style="left:691.17px;top:857.40px;width:10.6px;height:10.6px;background:#d8d8d8;transform:rotate(45deg)"></div>
<div class="a" style="left:700.97px;top:857.40px;width:10.6px;height:10.6px;background:#d8d8d8;transform:rotate(45deg)"></div>
<div class="a" style="left:710.78px;top:857.40px;width:10.6px;height:10.6px;background:#d8d8d8;transform:rotate(45deg)"></div>
<div class="a" style="left:720.58px;top:857.40px;width:10.6px;height:10.6px;background:#d8d8d8;transform:rotate(45deg)"></div>
<div class="a" style="left:740.18px;top:857.40px;width:10.6px;height:10.6px;background:#d8d8d8;transform:rotate(45deg)"></div>
<div class="a" style="left:759.79px;top:857.40px;width:10.6px;height:10.6px;background:#d8d8d8;transform:rotate(45deg)"></div>
<div class="a" style="left:769.59px;top:857.40px;width:10.6px;height:10.6px;background:#d8d8d8;transform:rotate(45deg)"></div>
<div class="a" style="left:779.40px;top:857.40px;width:10.6px;height:10.6px;background:#d8d8d8;transform:rotate(45deg)"></div>
<div class="a" style="left:789.20px;top:857.40px;width:10.6px;height:10.6px;background:#d8d8d8;transform:rotate(45deg)"></div>
<div class="t" style="left:467.70px;top:859.00px;font-size:12.0px;line-height:12.0px;color:#5c5c5c;letter-spacing:0">?</div>
<div class="t" style="left:477.50px;top:859.00px;font-size:12.0px;line-height:12.0px;color:#5c5c5c;letter-spacing:0">?</div>
<div class="t" style="left:487.31px;top:859.00px;font-size:12.0px;line-height:12.0px;color:#5c5c5c;letter-spacing:0">?</div>
<div class="t" style="left:497.11px;top:859.00px;font-size:12.0px;line-height:12.0px;color:#5c5c5c;letter-spacing:0">?</div>
<div class="t" style="left:516.72px;top:859.00px;font-size:12.0px;line-height:12.0px;color:#5c5c5c;letter-spacing:0">?</div>
<div class="t" style="left:526.52px;top:859.00px;font-size:12.0px;line-height:12.0px;color:#5c5c5c;letter-spacing:0">?</div>
<div class="t" style="left:575.53px;top:859.00px;font-size:12.0px;line-height:12.0px;color:#5c5c5c;letter-spacing:0">?</div>
<div class="t" style="left:595.14px;top:859.00px;font-size:12.0px;line-height:12.0px;color:#5c5c5c;letter-spacing:0">?</div>
<div class="t" style="left:604.94px;top:859.00px;font-size:12.0px;line-height:12.0px;color:#5c5c5c;letter-spacing:0">?</div>
<div class="t" style="left:614.75px;top:859.00px;font-size:12.0px;line-height:12.0px;color:#5c5c5c;letter-spacing:0">?</div>
<div class="t" style="left:634.35px;top:859.00px;font-size:12.0px;line-height:12.0px;color:#5c5c5c;letter-spacing:0">?</div>
<div class="t" style="left:644.15px;top:859.00px;font-size:12.0px;line-height:12.0px;color:#5c5c5c;letter-spacing:0">?</div>
<div class="t" style="left:663.76px;top:859.00px;font-size:12.0px;line-height:12.0px;color:#5c5c5c;letter-spacing:0">?</div>
<div class="t" style="left:683.37px;top:859.00px;font-size:12.0px;line-height:12.0px;color:#5c5c5c;letter-spacing:0">?</div>
<div class="t" style="left:693.17px;top:859.00px;font-size:12.0px;line-height:12.0px;color:#5c5c5c;letter-spacing:0">?</div>
<div class="t" style="left:702.97px;top:859.00px;font-size:12.0px;line-height:12.0px;color:#5c5c5c;letter-spacing:0">?</div>
<div class="t" style="left:712.78px;top:859.00px;font-size:12.0px;line-height:12.0px;color:#5c5c5c;letter-spacing:0">?</div>
<div class="t" style="left:722.58px;top:859.00px;font-size:12.0px;line-height:12.0px;color:#5c5c5c;letter-spacing:0">?</div>
<div class="t" style="left:742.18px;top:859.00px;font-size:12.0px;line-height:12.0px;color:#5c5c5c;letter-spacing:0">?</div>
<div class="t" style="left:761.79px;top:859.00px;font-size:12.0px;line-height:12.0px;color:#5c5c5c;letter-spacing:0">?</div>
<div class="t" style="left:771.59px;top:859.00px;font-size:12.0px;line-height:12.0px;color:#5c5c5c;letter-spacing:0">?</div>
<div class="t" style="left:781.40px;top:859.00px;font-size:12.0px;line-height:12.0px;color:#5c5c5c;letter-spacing:0">?</div>
<div class="t" style="left:791.20px;top:859.00px;font-size:12.0px;line-height:12.0px;color:#5c5c5c;letter-spacing:0">?</div>
<div class="t" style="left:505.59px;top:857.00px;font-size:15.6px;line-height:15.6px;font-family:'Liberation Mono',monospace;color:#d4d4d4;letter-spacing:0;letter-spacing:-0.12px">.</div>
<div class="t" style="left:535.00px;top:857.00px;font-size:15.6px;line-height:15.6px;font-family:'Liberation Mono',monospace;color:#d4d4d4;letter-spacing:0;letter-spacing:-0.12px">t</div>
<div class="t" style="left:544.80px;top:857.00px;font-size:15.6px;line-height:15.6px;font-family:'Liberation Mono',monospace;color:#d4d4d4;letter-spacing:0;letter-spacing:-0.12px">e</div>
<div class="t" style="left:554.61px;top:857.00px;font-size:15.6px;line-height:15.6px;font-family:'Liberation Mono',monospace;color:#d4d4d4;letter-spacing:0;letter-spacing:-0.12px">x</div>
<div class="t" style="left:564.41px;top:857.00px;font-size:15.6px;line-height:15.6px;font-family:'Liberation Mono',monospace;color:#d4d4d4;letter-spacing:0;letter-spacing:-0.12px">t</div>
<div class="t" style="left:584.02px;top:857.00px;font-size:15.6px;line-height:15.6px;font-family:'Liberation Mono',monospace;color:#d4d4d4;letter-spacing:0;letter-spacing:-0.12px">1</div>
<div class="t" style="left:623.23px;top:857.00px;font-size:15.6px;line-height:15.6px;font-family:'Liberation Mono',monospace;color:#d4d4d4;letter-spacing:0;letter-spacing:-0.12px">.</div>
<div class="t" style="left:652.64px;top:857.00px;font-size:15.6px;line-height:15.6px;font-family:'Liberation Mono',monospace;color:#d4d4d4;letter-spacing:0;letter-spacing:-0.12px">\</div>
<div class="t" style="left:672.24px;top:857.00px;font-size:15.6px;line-height:15.6px;font-family:'Liberation Mono',monospace;color:#d4d4d4;letter-spacing:0;letter-spacing:-0.12px">6</div>
<div class="t" style="left:731.06px;top:857.00px;font-size:15.6px;line-height:15.6px;font-family:'Liberation Mono',monospace;color:#d4d4d4;letter-spacing:0;letter-spacing:-0.12px">k</div>
<div class="t" style="left:750.67px;top:857.00px;font-size:15.6px;line-height:15.6px;font-family:'Liberation Mono',monospace;color:#d4d4d4;letter-spacing:0;letter-spacing:-0.12px">d</div>
<div class="t" style="left:426.00px;top:877.00px;font-size:15.6px;line-height:15.6px;font-family:'Liberation Mono',monospace;color:#d4d4d4;letter-spacing:0;letter-spacing:-0.12px">6 - </div>
<div class="a" style="left:474.93px;top:877.40px;width:10.6px;height:10.6px;background:#d8d8d8;transform:rotate(45deg)"></div>
<div class="a" style="left:484.15px;top:877.40px;width:10.6px;height:10.6px;background:#d8d8d8;transform:rotate(45deg)"></div>
<div class="a" style="left:493.38px;top:877.40px;width:10.6px;height:10.6px;background:#d8d8d8;transform:rotate(45deg)"></div>
<div class="a" style="left:511.84px;top:877.40px;width:10.6px;height:10.6px;background:#d8d8d8;transform:rotate(45deg)"></div>
<div class="a" style="left:521.06px;top:877.40px;width:10.6px;height:10.6px;background:#d8d8d8;transform:rotate(45deg)"></div>
<div class="a" style="left:539.52px;top:877.40px;width:10.6px;height:10.6px;background:#d8d8d8;transform:rotate(45deg)"></div>
<div class="a" style="left:548.75px;top:877.40px;width:10.6px;height:10.6px;background:#d8d8d8;transform:rotate(45deg)"></div>
<div class="a" style="left:567.20px;top:877.40px;width:10.6px;height:10.6px;background:#d8d8d8;transform:rotate(45deg)"></div>
<div class="t" style="left:476.93px;top:879.00px;font-size:12.0px;line-height:12.0px;color:#5c5c5c;letter-spacing:0">?</div>
<div class="t" style="left:486.15px;top:879.00px;font-size:12.0px;line-height:12.0px;color:#5c5c5c;letter-spacing:0">?</div>
<div class="t" style="left:495.38px;top:879.00px;font-size:12.0px;line-height:12.0px;color:#5c5c5c;letter-spacing:0">?</div>
<div class="t" style="left:513.84px;top:879.00px;font-size:12.0px;line-height:12.0px;color:#5c5c5c;letter-spacing:0">?</div>
<div class="t" style="left:523.06px;top:879.00px;font-size:12.0px;line-height:12.0px;color:#5c5c5c;letter-spacing:0">?</div>
<div class="t" style="left:541.52px;top:879.00px;font-size:12.0px;line-height:12.0px;color:#5c5c5c;letter-spacing:0">?</div>
<div class="t" style="left:550.75px;top:879.00px;font-size:12.0px;line-height:12.0px;color:#5c5c5c;letter-spacing:0">?</div>
<div class="t" style="left:569.20px;top:879.00px;font-size:12.0px;line-height:12.0px;color:#5c5c5c;letter-spacing:0">?</div>
<div class="t" style="left:466.38px;top:877.00px;font-size:15.6px;line-height:15.6px;font-family:'Liberation Mono',monospace;color:#d4d4d4;letter-spacing:0;letter-spacing:-0.12px">r</div>
<div class="t" style="left:503.29px;top:877.00px;font-size:15.6px;line-height:15.6px;font-family:'Liberation Mono',monospace;color:#d4d4d4;letter-spacing:0;letter-spacing:-0.12px">l</div>
<div class="t" style="left:530.97px;top:877.00px;font-size:15.6px;line-height:15.6px;font-family:'Liberation Mono',monospace;color:#d4d4d4;letter-spacing:0;letter-spacing:-0.12px">k</div>
<div class="t" style="left:558.65px;top:877.00px;font-size:15.6px;line-height:15.6px;font-family:'Liberation Mono',monospace;color:#d4d4d4;letter-spacing:0;letter-spacing:-0.12px">l</div>
<div class="t" style="left:426.00px;top:897.00px;font-size:15.6px;line-height:15.6px;font-family:'Liberation Mono',monospace;color:#d4d4d4;letter-spacing:0;letter-spacing:-0.12px">7 - </div>
<div class="a" style="left:465.70px;top:897.40px;width:10.6px;height:10.6px;background:#d8d8d8;transform:rotate(45deg)"></div>
<div class="a" style="left:474.99px;top:897.40px;width:10.6px;height:10.6px;background:#d8d8d8;transform:rotate(45deg)"></div>
<div class="a" style="left:484.28px;top:897.40px;width:10.6px;height:10.6px;background:#d8d8d8;transform:rotate(45deg)"></div>
<div class="a" style="left:493.57px;top:897.40px;width:10.6px;height:10.6px;background:#d8d8d8;transform:rotate(45deg)"></div>
<div class="a" style="left:502.87px;top:897.40px;width:10.6px;height:10.6px;background:#d8d8d8;transform:rotate(45deg)"></div>
<div class="a" style="left:521.45px;top:897.40px;width:10.6px;height:10.6px;background:#d8d8d8;transform:rotate(45deg)"></div>
<div class="a" style="left:530.74px;top:897.40px;width:10.6px;height:10.6px;background:#d8d8d8;transform:rotate(45deg)"></div>
<div class="a" style="left:540.03px;top:897.40px;width:10.6px;height:10.6px;background:#d8d8d8;transform:rotate(45deg)"></div>
<div class="a" style="left:558.62px;top:897.40px;width:10.6px;height:10.6px;background:#d8d8d8;transform:rotate(45deg)"></div>
<div class="a" style="left:577.20px;top:897.40px;width:10.6px;height:10.6px;background:#d8d8d8;transform:rotate(45deg)"></div>
<div class="t" style="left:467.70px;top:899.00px;font-size:12.0px;line-height:12.0px;color:#5c5c5c;letter-spacing:0">?</div>
<div class="t" style="left:476.99px;top:899.00px;font-size:12.0px;line-height:12.0px;color:#5c5c5c;letter-spacing:0">?</div>
<div class="t" style="left:486.28px;top:899.00px;font-size:12.0px;line-height:12.0px;color:#5c5c5c;letter-spacing:0">?</div>
<div class="t" style="left:495.57px;top:899.00px;font-size:12.0px;line-height:12.0px;color:#5c5c5c;letter-spacing:0">?</div>
<div class="t" style="left:504.87px;top:899.00px;font-size:12.0px;line-height:12.0px;color:#5c5c5c;letter-spacing:0">?</div>
<div class="t" style="left:523.45px;top:899.00px;font-size:12.0px;line-height:12.0px;color:#5c5c5c;letter-spacing:0">?</div>
<div class="t" style="left:532.74px;top:899.00px;font-size:12.0px;line-height:12.0px;color:#5c5c5c;letter-spacing:0">?</div>
<div class="t" style="left:542.03px;top:899.00px;font-size:12.0px;line-height:12.0px;color:#5c5c5c;letter-spacing:0">?</div>
<div class="t" style="left:560.62px;top:899.00px;font-size:12.0px;line-height:12.0px;color:#5c5c5c;letter-spacing:0">?</div>
<div class="t" style="left:579.20px;top:899.00px;font-size:12.0px;line-height:12.0px;color:#5c5c5c;letter-spacing:0">?</div>
<div class="t" style="left:512.84px;top:897.00px;font-size:15.6px;line-height:15.6px;font-family:'Liberation Mono',monospace;color:#d4d4d4;letter-spacing:0;letter-spacing:-0.12px">l</div>
<div class="t" style="left:550.00px;top:897.00px;font-size:15.6px;line-height:15.6px;font-family:'Liberation Mono',monospace;color:#d4d4d4;letter-spacing:0;letter-spacing:-0.12px">d</div>
<div class="t" style="left:568.59px;top:897.00px;font-size:15.6px;line-height:15.6px;font-family:'Liberation Mono',monospace;color:#d4d4d4;letter-spacing:0;letter-spacing:-0.12px">j</div>
<div class="t" style="left:426.00px;top:917.00px;font-size:15.6px;line-height:15.6px;font-family:'Liberation Mono',monospace;color:#d4d4d4;letter-spacing:0;letter-spacing:-0.12px">8 - </div>
<div class="a" style="left:474.89px;top:917.40px;width:10.6px;height:10.6px;background:#d8d8d8;transform:rotate(45deg)"></div>
<div class="a" style="left:484.08px;top:917.40px;width:10.6px;height:10.6px;background:#d8d8d8;transform:rotate(45deg)"></div>
<div class="a" style="left:493.28px;top:917.40px;width:10.6px;height:10.6px;background:#d8d8d8;transform:rotate(45deg)"></div>
<div class="a" style="left:511.66px;top:917.40px;width:10.6px;height:10.6px;background:#d8d8d8;transform:rotate(45deg)"></div>
<div class="a" style="left:548.43px;top:917.40px;width:10.6px;height:10.6px;background:#d8d8d8;transform:rotate(45deg)"></div>
<div class="a" style="left:566.82px;top:917.40px;width:10.6px;height:10.6px;background:#d8d8d8;transform:rotate(45deg)"></div>
<div class="a" style="left:576.01px;top:917.40px;width:10.6px;height:10.6px;background:#d8d8d8;transform:rotate(45deg)"></div>
<div class="a" style="left:585.20px;top:917.40px;width:10.6px;height:10.6px;background:#d8d8d8;transform:rotate(45deg)"></div>
<div class="t" style="left:476.89px;top:919.00px;font-size:12.0px;line-height:12.0px;color:#5c5c5c;letter-spacing:0">?</div>
<div class="t" style="left:486.08px;top:919.00px;font-size:12.0px;line-height:12.0px;color:#5c5c5c;letter-spacing:0">?</div>
<div class="t" style="left:495.28px;top:919.00px;font-size:12.0px;line-height:12.0px;color:#5c5c5c;letter-spacing:0">?</div>
<div class="t" style="left:513.66px;top:919.00px;font-size:12.0px;line-height:12.0px;color:#5c5c5c;letter-spacing:0">?</div>
<div class="t" style="left:550.43px;top:919.00px;font-size:12.0px;line-height:12.0px;color:#5c5c5c;letter-spacing:0">?</div>
<div class="t" style="left:568.82px;top:919.00px;font-size:12.0px;line-height:12.0px;color:#5c5c5c;letter-spacing:0">?</div>
<div class="t" style="left:578.01px;top:919.00px;font-size:12.0px;line-height:12.0px;color:#5c5c5c;letter-spacing:0">?</div>
<div class="t" style="left:587.20px;top:919.00px;font-size:12.0px;line-height:12.0px;color:#5c5c5c;letter-spacing:0">?</div>
<div class="t" style="left:466.38px;top:917.00px;font-size:15.6px;line-height:15.6px;font-family:'Liberation Mono',monospace;color:#d4d4d4;letter-spacing:0;letter-spacing:-0.12px">д</div>
<div class="t" style="left:503.15px;top:917.00px;font-size:15.6px;line-height:15.6px;font-family:'Liberation Mono',monospace;color:#d4d4d4;letter-spacing:0;letter-spacing:-0.12px">s</div>
<div class="t" style="left:521.53px;top:917.00px;font-size:15.6px;line-height:15.6px;font-family:'Liberation Mono',monospace;color:#d4d4d4;letter-spacing:0;letter-spacing:-0.12px">C</div>
<div class="t" style="left:530.73px;top:917.00px;font-size:15.6px;line-height:15.6px;font-family:'Liberation Mono',monospace;color:#d4d4d4;letter-spacing:0;letter-spacing:-0.12px">S</div>
<div class="t" style="left:539.92px;top:917.00px;font-size:15.6px;line-height:15.6px;font-family:'Liberation Mono',monospace;color:#d4d4d4;letter-spacing:0;letter-spacing:-0.12px">V</div>
<div class="t" style="left:558.30px;top:917.00px;font-size:15.6px;line-height:15.6px;font-family:'Liberation Mono',monospace;color:#d4d4d4;letter-spacing:0;letter-spacing:-0.12px">l</div>
<div class="t" style="left:426.00px;top:937.00px;font-size:15.6px;line-height:15.6px;font-family:'Liberation Mono',monospace;color:#d4d4d4;letter-spacing:0;letter-spacing:-0.12px">9 - </div>
<div class="a" style="left:465.70px;top:937.40px;width:10.6px;height:10.6px;background:#d8d8d8;transform:rotate(45deg)"></div>
<div class="a" style="left:474.95px;top:937.40px;width:10.6px;height:10.6px;background:#d8d8d8;transform:rotate(45deg)"></div>
<div class="a" style="left:511.95px;top:937.40px;width:10.6px;height:10.6px;background:#d8d8d8;transform:rotate(45deg)"></div>
<div class="a" style="left:530.45px;top:937.40px;width:10.6px;height:10.6px;background:#d8d8d8;transform:rotate(45deg)"></div>
<div class="a" style="left:539.70px;top:937.40px;width:10.6px;height:10.6px;background:#d8d8d8;transform:rotate(45deg)"></div>
<div class="a" style="left:558.20px;top:937.40px;width:10.6px;height:10.6px;background:#d8d8d8;transform:rotate(45deg)"></div>
<div class="a" style="left:567.45px;top:937.40px;width:10.6px;height:10.6px;background:#d8d8d8;transform:rotate(45deg)"></div>
<div class="a" style="left:576.70px;top:937.40px;width:10.6px;height:10.6px;background:#d8d8d8;transform:rotate(45deg)"></div>
<div class="a" style="left:585.95px;top:937.40px;width:10.6px;height:10.6px;background:#d8d8d8;transform:rotate(45deg)"></div>
<div class="a" style="left:595.20px;top:937.40px;width:10.6px;height:10.6px;background:#d8d8d8;transform:rotate(45deg)"></div>
<div class="t" style="left:467.70px;top:939.00px;font-size:12.0px;line-height:12.0px;color:#5c5c5c;letter-spacing:0">?</div>
<div class="t" style="left:476.95px;top:939.00px;font-size:12.0px;line-height:12.0px;color:#5c5c5c;letter-spacing:0">?</div>
<div class="t" style="left:513.95px;top:939.00px;font-size:12.0px;line-height:12.0px;color:#5c5c5c;letter-spacing:0">?</div>
<div class="t" style="left:532.45px;top:939.00px;font-size:12.0px;line-height:12.0px;color:#5c5c5c;letter-spacing:0">?</div>
<div class="t" style="left:541.70px;top:939.00px;font-size:12.0px;line-height:12.0px;color:#5c5c5c;letter-spacing:0">?</div>
<div class="t" style="left:560.20px;top:939.00px;font-size:12.0px;line-height:12.0px;color:#5c5c5c;letter-spacing:0">?</div>
<div class="t" style="left:569.45px;top:939.00px;font-size:12.0px;line-height:12.0px;color:#5c5c5c;letter-spacing:0">?</div>
<div class="t" style="left:578.70px;top:939.00px;font-size:12.0px;line-height:12.0px;color:#5c5c5c;letter-spacing:0">?</div>
<div class="t" style="left:587.95px;top:939.00px;font-size:12.0px;line-height:12.0px;color:#5c5c5c;letter-spacing:0">?</div>
<div class="t" style="left:597.20px;top:939.00px;font-size:12.0px;line-height:12.0px;color:#5c5c5c;letter-spacing:0">?</div>
<div class="t" style="left:484.88px;top:937.00px;font-size:15.6px;line-height:15.6px;font-family:'Liberation Mono',monospace;color:#d4d4d4;letter-spacing:0;letter-spacing:-0.12px">C</div>
<div class="t" style="left:494.13px;top:937.00px;font-size:15.6px;line-height:15.6px;font-family:'Liberation Mono',monospace;color:#d4d4d4;letter-spacing:0;letter-spacing:-0.12px">S</div>
<div class="t" style="left:503.38px;top:937.00px;font-size:15.6px;line-height:15.6px;font-family:'Liberation Mono',monospace;color:#d4d4d4;letter-spacing:0;letter-spacing:-0.12px">V</div>
<div class="t" style="left:521.88px;top:937.00px;font-size:15.6px;line-height:15.6px;font-family:'Liberation Mono',monospace;color:#d4d4d4;letter-spacing:0;letter-spacing:-0.12px">l</div>
<div class="t" style="left:549.63px;top:937.00px;font-size:15.6px;line-height:15.6px;font-family:'Liberation Mono',monospace;color:#d4d4d4;letter-spacing:0;letter-spacing:-0.12px">k</div>
<svg style="left:1907.5px;top:618.5px" width="9" height="6" viewBox="0 0 9 6"><path d="M0 6L4.5 0L9 6Z" fill="#4e4e4e"/></svg>
<div class="a" style="left:1907.8px;top:630.5px;width:9.4px;height:104.5px;background:#454545;border-radius:5px"></div>
<svg style="left:1907.5px;top:953.5px" width="9" height="6" viewBox="0 0 9 6"><path d="M0 0L4.5 6L9 0Z" fill="#4e4e4e"/></svg>
<div class="a" style="left:408.8px;top:971.2px;width:1362.2px;height:32.5px;background:#2b2b2b;border-radius:2px"></div>
<div class="t" style="left:422.00px;top:981.00px;font-size:14.98px;line-height:14.98px;color:#565656;letter-spacing:0.159px">Type in a message to send to the serial port.</div>
<div class="t" style="left:1610.70px;top:981.00px;font-size:14.98px;line-height:14.98px;color:#5a5a5a;letter-spacing:-0.190px">Send as Text</div>
<svg style="left:1711px;top:982px" width="19" height="10" viewBox="0 0 19 10"><path d="M0.8 0.8L9.5 9.2L18.2 0.8" stroke="#5a5a5a" stroke-width="1.4" fill="none"/></svg>
<svg style="left:1748px;top:980.5px" width="15" height="14" viewBox="0 0 15 14"><path d="M0.8 0.8L14.2 7L0.8 13.2L2.8 7Z" stroke="#5a5a5a" stroke-width="1.3" fill="none" stroke-linejoin="round"/><path d="M2.8 7H8" stroke="#5a5a5a" stroke-width="1.3"/></svg>
<div class="a" style="left:1778px;top:971.2px;width:134.4px;height:32.5px;background:#163a55;border-radius:2px"></div>
<div class="t" style="left:1785.60px;top:981.00px;font-size:14.98px;line-height:14.98px;color:#7d8b97;letter-spacing:0.240px">Send Ctrl + C</div>
<div class="a" style="left:1888px;top:976px;width:1px;height:23px;background:#3b5f7a"></div>
<svg style="left:1894.4px;top:985px" width="13" height="7" viewBox="0 0 13 7"><path d="M0.8 0.8L6.5 6.2L12.2 0.8" stroke="#7d8b97" stroke-width="1.3" fill="none"/></svg>
<!-- ============ STATUS BAR ============ -->
<div class="a" style="left:0px;top:1006px;width:1920px;height:26px;background:#007acc"></div>
<svg style="left:13px;top:1012px" width="13" height="14" viewBox="0 0 13 14" fill="none" stroke="#ffffff" stroke-width="1.5"><path d="M0.8 6.5L5 9.5L0.8 13.2M12.2 0.8L8 4L12.2 7.5"/></svg>
<svg style="left:49.2px;top:1011px" width="17" height="17" viewBox="0 0 17 17" fill="none" stroke="#ffffff" stroke-width="1.3"><circle cx="8.5" cy="8.5" r="7.6"/><path d="M5.5 5.5L11.5 11.5M11.5 5.5L5.5 11.5"/></svg>
<div class="t" style="left:71.80px;top:1014.00px;font-size:13.82px;line-height:13.82px;color:#ffffff;letter-spacing:-0.688px">3</div>
<svg style="left:84.2px;top:1011px" width="17" height="16" viewBox="0 0 17 16" fill="none" stroke="#ffffff" stroke-width="1.3"><path d="M8.5 0.8L16.2 15.2H0.8Z" stroke-linejoin="round"/><path d="M8.5 5.5V10.5M8.5 12V13.2"/></svg>
<div class="t" style="left:107.20px;top:1014.00px;font-size:13.82px;line-height:13.82px;color:#ffffff;letter-spacing:-1.688px">1</div>
<div class="t" style="left:133.40px;top:1014.00px;font-size:13.82px;line-height:13.82px;color:#ffffff;letter-spacing:0.159px">clangd: idle</div>
<svg style="left:226px;top:1011px" width="17" height="17" viewBox="0 0 17 17" fill="none" stroke="#ffffff" stroke-width="1.4"><circle cx="8.5" cy="8.5" r="7.6"/><circle cx="8.5" cy="8.5" r="4.2"/><circle cx="8.5" cy="8.5" r="1.2" fill="#ffffff"/></svg>
<div class="t" style="left:248.70px;top:1014.00px;font-size:13.82px;line-height:13.82px;color:#ffffff;letter-spacing:-0.556px">Flash</div>
<svg style="left:300px;top:1010.5px" width="17" height="18" viewBox="0 0 17 18" fill="none" stroke="#ffffff" stroke-width="1.3"><path d="M2.5 1V4.5H6V1M1 1V5A3.2 3.2 0 0 0 4.2 8.2V16A1.2 1.2 0 0 0 6.6 16V8.2A3.2 3.2 0 0 0 7.5 5V1"/><rect x="11" y="1" width="5" height="6" rx="1"/><path d="M12 7V16.5A1.5 1.5 0 0 0 15 16.5V7"/></svg>
<div class="t" style="left:323.00px;top:1014.00px;font-size:13.82px;line-height:13.82px;color:#ffffff;letter-spacing:0.065px">Arm Tools: 4</div>
<div class="t" style="left:1430.40px;top:1014.00px;font-size:13.82px;line-height:13.82px;color:#ffffff;letter-spacing:-0.113px">Ln 263, Col 9</div>
<div class="t" style="left:1531.50px;top:1014.00px;font-size:13.82px;line-height:13.82px;color:#ffffff;letter-spacing:-0.322px">Tab Size: 4</div>
<div class="t" style="left:1615.80px;top:1014.00px;font-size:13.82px;line-height:13.82px;color:#ffffff;letter-spacing:-0.233px">GB 2312</div>
<div class="t" style="left:1688.20px;top:1014.00px;font-size:13.82px;line-height:13.82px;color:#ffffff;letter-spacing:-1.195px">CRLF</div>
<svg style="left:1739.5px;top:1010.5px" width="20" height="19" viewBox="0 0 20 19" fill="none" stroke="#ffffff" stroke-width="1.3"><path d="M5.5 0.8Q3 0.8 3 3.3V6.3Q3 8 1 8Q3 8 3 9.7V12.7Q3 15.2 5.5 15.2"/><path d="M12 0.8Q14.5 0.8 14.5 3.3V6.3Q14.5 8 16.5 8Q14.5 8 14.5 9.7V11"/><circle cx="13.8" cy="14.2" r="3.7" fill="#ffffff" stroke="#007acc" stroke-width="0.8"/><path d="M12.4 12.8L15.2 15.6M15.2 12.8L12.4 15.6" stroke="#007acc" stroke-width="0.9"/></svg>
<div class="t" style="left:1765.00px;top:1014.00px;font-size:13.82px;line-height:13.82px;color:#ffffff;letter-spacing:-0.784px">C</div>
<svg style="left:1793px;top:1009.5px" width="20" height="18" viewBox="0 0 20 18"><path d="M2.2 9.5Q0.8 10 0.8 12Q1.2 16.3 10 17.2Q18.8 16.3 19.2 12Q19.2 10 17.8 9.5Z" fill="#ffffff"/><circle cx="6.2" cy="5.2" r="3.8" fill="none" stroke="#ffffff" stroke-width="2.2"/><circle cx="13.8" cy="5.2" r="3.8" fill="none" stroke="#ffffff" stroke-width="2.2"/><path d="M3 9.5H17" stroke="#ffffff" stroke-width="1.5"/><rect x="6.3" y="11.2" width="2.6" height="3.4" fill="#007acc"/><rect x="11.1" y="11.2" width="2.6" height="3.4" fill="#007acc"/><path d="M5 13V14.5M15 13V14.5" stroke="#007acc" stroke-width="1"/></svg>
<div class="t" style="left:1831.50px;top:1014.00px;font-size:13.82px;line-height:13.82px;color:#ffffff;letter-spacing:0.229px">Win32</div>
<svg style="left:1892.5px;top:1010.5px" width="17" height="17" viewBox="0 0 17 17" fill="none" stroke="#ffffff" stroke-width="1.3"><path d="M3 12.5V7A5.5 5.5 0 0 1 14 7V12.5L15.8 14H1.2Z" stroke-linejoin="round"/><path d="M6.5 15.5A2 2 0 0 0 10.5 15.5"/></svg>
</body></html>
